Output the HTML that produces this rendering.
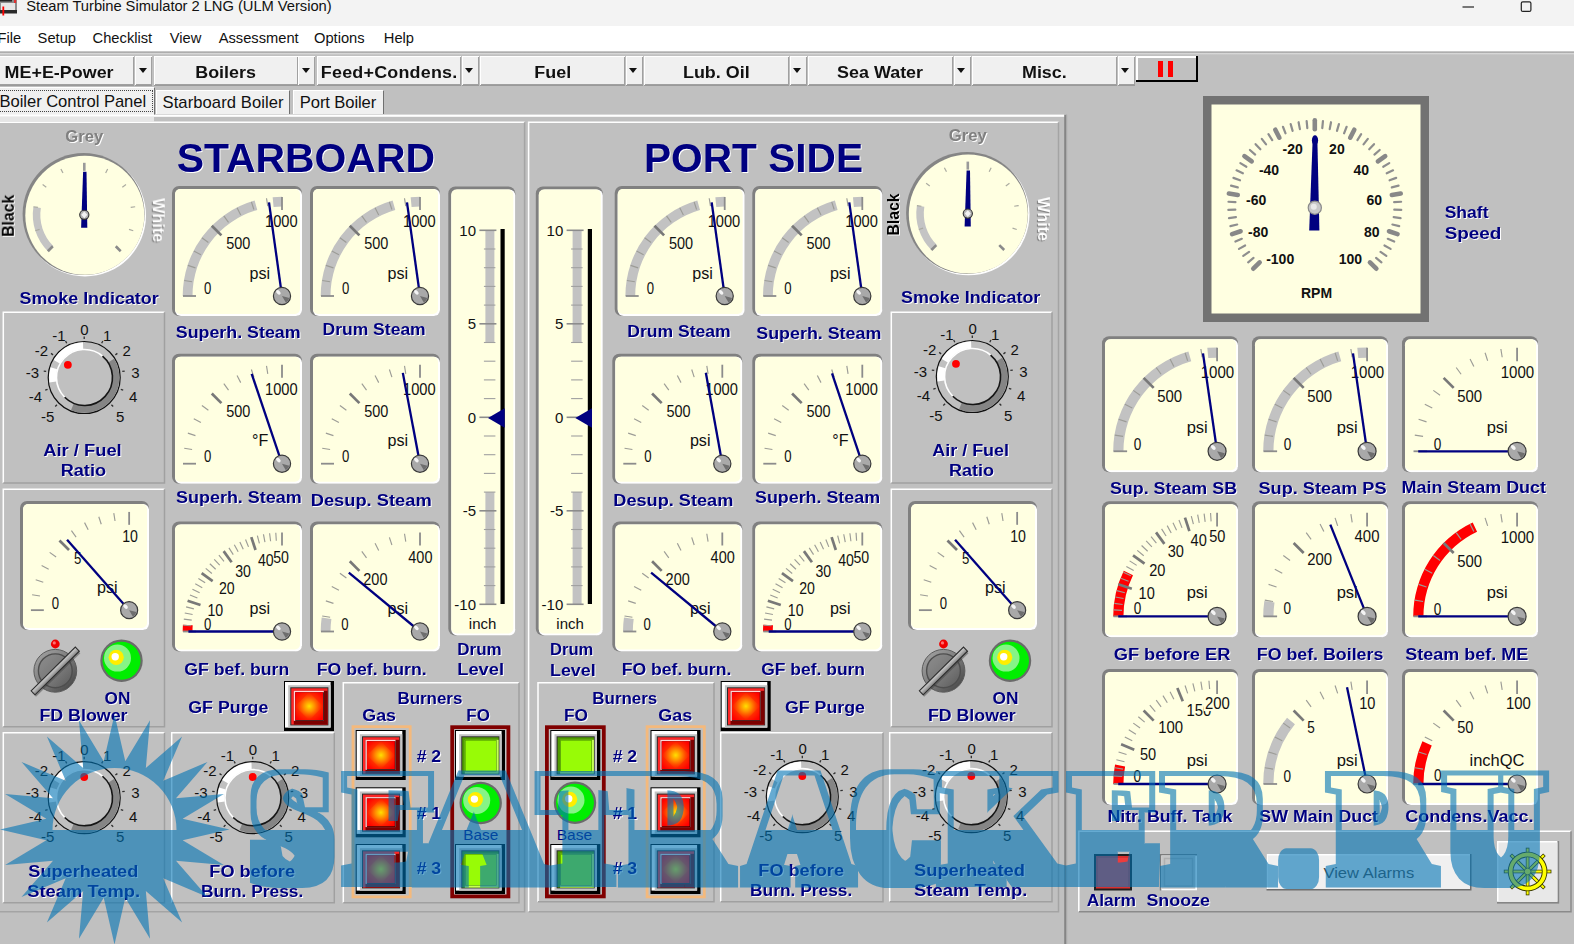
<!DOCTYPE html>
<html lang="en"><head><meta charset="utf-8">
<title>Steam Turbine Simulator 2 LNG (ULM Version)</title>
<style>
html,body{margin:0;padding:0;background:#c0c0c0;}
body{width:1574px;height:944px;overflow:hidden;position:relative;font-family:'Liberation Sans',sans-serif;}
#titlebar{position:absolute;left:0;top:0;width:1574px;height:26px;background:#f3f3f3;}
#titlebar .t{position:absolute;left:26.3px;top:-2.6px;font-size:14.75px;line-height:18px;color:#111;white-space:nowrap;letter-spacing:-.05px}
#menubar{position:absolute;left:0;top:26px;width:1574px;height:25px;background:#ffffff;}
#menubar span{position:absolute;top:3px;font-size:14.7px;line-height:18px;color:#111;white-space:nowrap}
#sep{position:absolute;left:0;top:50.6px;width:1574px;height:4.6px;background:linear-gradient(#e8e8e8 0,#9c9c9c 28%,#d8d8d8 60%,#c0c0c0 100%);}
.tb{position:absolute;top:56px;height:28.5px;background:#f0f0f0;box-shadow:inset 1px 1px 0 #fff,inset -1px -1px 0 #a0a0a0,0 1px 0 #9a9a9a;text-align:center;font-weight:bold;font-size:16.3px;line-height:33.5px;color:#111;white-space:nowrap;box-sizing:border-box;overflow:hidden}
.tb span{display:inline-block;transform:scaleX(1.1);transform-origin:center}
.ta{position:absolute;top:56px;width:17px;height:28.5px;background:#f0f0f0;box-shadow:inset 1px 1px 0 #fff,inset -1px -1px 0 #a0a0a0,0 1px 0 #9a9a9a;}
.ta i{position:absolute;left:3.8px;top:12.2px;width:0;height:0;border-left:4.9px solid transparent;border-right:4.9px solid transparent;border-top:5.4px solid #111}
#pause{position:absolute;left:1135.5px;top:56px;width:62px;height:26px;background:#000}
#pause b{position:absolute;left:0;top:0;width:60px;height:24px;background:#fff}
#pause em{position:absolute;left:2px;top:2px;width:58px;height:22px;background:#c0c0c0}
#pause s{position:absolute;top:5px;width:5px;height:16px;background:#ff0000}
.tab{position:absolute;background:#f0f0f0;box-sizing:border-box;font-size:16px;color:#111;white-space:nowrap;border-top:1px solid #fff;border-left:1px solid #fff;border-right:1.5px solid #707070}
#main text{font-family:'Liberation Sans',sans-serif}
#wm text{font-family:'Liberation Serif',serif;font-weight:bold}
#main{position:absolute;left:0;top:0}
#wm{position:absolute;left:0;top:0;pointer-events:none}
</style></head>
<body>
<div id="titlebar">
 <svg width="20" height="18" style="position:absolute;left:0;top:0"><rect x="-2" y="0" width="19" height="13" fill="#8c8c8c"/><rect x="1" y="3" width="14" height="7" fill="#e6e6e6"/><rect x="-2" y="10" width="19" height="3.5" fill="#2a2a2a"/><rect x="-2" y="-1" width="14" height="2.5" fill="#222"/><rect x="2.4" y="6.5" width="1.8" height="9" fill="#ff0000"/><rect x="14" y="0" width="2.2" height="3" fill="#e03030"/></svg>
 <div class="t">Steam Turbine Simulator 2 LNG (ULM Version)</div>
 <svg width="120" height="26" style="position:absolute;left:1454px;top:0"><line x1="8.5" y1="7" x2="20" y2="7" stroke="#222" stroke-width="1.2"/><rect x="67.3" y="1.8" width="9.6" height="9.6" rx="1.5" fill="none" stroke="#222" stroke-width="1.2"/></svg>
</div>
<div id="menubar">
 <span style="left:-2.5px">File</span><span style="left:37.6px">Setup</span><span style="left:92.6px">Checklist</span><span style="left:169.8px">View</span><span style="left:218.7px">Assessment</span><span style="left:314px">Options</span><span style="left:383.8px">Help</span>
</div>
<div id="sep"></div>
<div id="toolbar"><div class="tb" style="left:-2px;width:136px;text-align:left"><span style="padding-left:11px">ME+E-Power</span></div><div class="ta" style="left:135px"><i></i></div><div class="tb" style="left:153.5px;width:144.3px"><span>Boilers</span></div><div class="ta" style="left:298.3px"><i></i></div><div class="tb" style="left:316.5px;width:144.5px"><span style="letter-spacing:.2px">Feed+Condens.</span></div><div class="ta" style="left:461.5px"><i></i></div><div class="tb" style="left:480px;width:145px"><span>Fuel</span></div><div class="ta" style="left:625.5px"><i></i></div><div class="tb" style="left:644px;width:145px"><span>Lub. Oil</span></div><div class="ta" style="left:789.5px"><i></i></div><div class="tb" style="left:808px;width:145px"><span>Sea Water</span></div><div class="ta" style="left:953.5px"><i></i></div><div class="tb" style="left:971.5px;width:145.6px"><span>Misc.</span></div><div class="ta" style="left:1117.6px"><i></i></div>
 <div id="pause"><b></b><em></em><s style="left:22.7px"></s><s style="left:32.4px"></s></div>
</div>
<div class="tab" style="left:-2px;top:86.5px;width:157.3px;height:28.5px;line-height:27px;padding-left:.5px;font-size:16.6px;letter-spacing:-.05px"><span style="position:absolute;left:-1px;top:2.5px;right:1.6px;bottom:3px;border:1px dotted #444"></span>Boiler Control Panel</div>
<div class="tab" style="left:156px;top:89.5px;width:134px;height:24.5px;line-height:23.5px;padding-left:5.5px;font-size:16.6px;letter-spacing:.08px">Starboard Boiler</div>
<div class="tab" style="left:292.8px;top:89.5px;width:91.6px;height:24.5px;line-height:23.5px;padding-left:6px;font-size:16.6px;letter-spacing:-.1px">Port Boiler</div>
<svg id="main" width="1574" height="944" viewBox="0 0 1574 944">
<defs>
 <radialGradient id="rg" cx="50%" cy="50%" r="50%"><stop offset="0" stop-color="#ffe000"/><stop offset=".4" stop-color="#ff8c00"/><stop offset="1" stop-color="#ff3000" stop-opacity="0"/></radialGradient>
 <radialGradient id="rb" cx="50%" cy="50%" r="62%"><stop offset="0" stop-color="#ff9000"/><stop offset=".55" stop-color="#ff3400"/><stop offset="1" stop-color="#ff0000"/></radialGradient>
 <linearGradient id="tgL" x1="0.42" y1="0.42" x2="0.58" y2="0.58"><stop offset="0" stop-color="#e4e4e4"/><stop offset=".45" stop-color="#b4b4b4"/><stop offset="1" stop-color="#565656"/></linearGradient>
 <linearGradient id="tgO" x1="0" y1="0" x2="1" y2="1"><stop offset="0" stop-color="#a8a8a8"/><stop offset=".5" stop-color="#7c7c7c"/><stop offset="1" stop-color="#3c3c3c"/></linearGradient>
 <linearGradient id="tgI" x1="0" y1="0" x2="1" y2="1"><stop offset="0" stop-color="#8e8e8e"/><stop offset=".6" stop-color="#767676"/><stop offset="1" stop-color="#5a5a5a"/></linearGradient>
</defs>
<rect x="0" y="114.6" width="1066" height="2.2" fill="#ffffff"/>
<rect x="0" y="116.8" width="154" height="4.6" fill="#e6e6e6"/>
<rect x="1064.2" y="114.6" width="2" height="840" fill="#858585"/>
<rect x="1066.2" y="114.6" width="1" height="840" fill="#a8a8a8"/>
<path d="M-2 911.7V122.3H524.6" fill="none" stroke="#ffffff" stroke-width="1.5"/>
<path d="M-2 911.7H524.6V122.3" fill="none" stroke="#a4a4a4" stroke-width="1.5"/>
<path d="M528.6 911.7V122.3H1058.5" fill="none" stroke="#ffffff" stroke-width="1.5"/>
<path d="M528.6 911.7H1058.5V122.3" fill="none" stroke="#a4a4a4" stroke-width="1.5"/>
<path d="M3.3 483V312.3H164.5" fill="none" stroke="#ffffff" stroke-width="1.5"/>
<path d="M3.3 483H164.5V312.3" fill="none" stroke="#a0a0a0" stroke-width="1.5"/>
<path d="M3.3 726.7V489.3H164.5" fill="none" stroke="#ffffff" stroke-width="1.5"/>
<path d="M3.3 726.7H164.5V489.3" fill="none" stroke="#a0a0a0" stroke-width="1.5"/>
<path d="M3.3 902.7V732.7H164.5" fill="none" stroke="#ffffff" stroke-width="1.5"/>
<path d="M3.3 902.7H164.5V732.7" fill="none" stroke="#a0a0a0" stroke-width="1.5"/>
<path d="M171.7 902.7V732.7H334.3" fill="none" stroke="#ffffff" stroke-width="1.5"/>
<path d="M171.7 902.7H334.3V732.7" fill="none" stroke="#a0a0a0" stroke-width="1.5"/>
<path d="M343.3 902.7V682.7H519" fill="none" stroke="#ffffff" stroke-width="1.5"/>
<path d="M343.3 902.7H519V682.7" fill="none" stroke="#a0a0a0" stroke-width="1.5"/>
<path d="M538 901.7V682.7H714" fill="none" stroke="#ffffff" stroke-width="1.5"/>
<path d="M538 901.7H714V682.7" fill="none" stroke="#a0a0a0" stroke-width="1.5"/>
<path d="M720.7 901.7V732.7H883" fill="none" stroke="#ffffff" stroke-width="1.5"/>
<path d="M720.7 901.7H883V732.7" fill="none" stroke="#a0a0a0" stroke-width="1.5"/>
<path d="M889.7 901.7V732.7H1052" fill="none" stroke="#ffffff" stroke-width="1.5"/>
<path d="M889.7 901.7H1052V732.7" fill="none" stroke="#a0a0a0" stroke-width="1.5"/>
<path d="M891.3 483V312.3H1052" fill="none" stroke="#ffffff" stroke-width="1.5"/>
<path d="M891.3 483H1052V312.3" fill="none" stroke="#a0a0a0" stroke-width="1.5"/>
<path d="M891.3 726.7V489.3H1052" fill="none" stroke="#ffffff" stroke-width="1.5"/>
<path d="M891.3 726.7H1052V489.3" fill="none" stroke="#a0a0a0" stroke-width="1.5"/>
<circle cx="85" cy="215.5" r="61" fill="#ffffff"/>
<circle cx="83.6" cy="214.1" r="61" fill="#858585"/>
<circle cx="84.8" cy="215.3" r="59.5" fill="#ffffe1"/>
<path d="M47.88 251.22A51.5 51.5 0 0 1 33.43 206.74L40.84 207.92A44 44 0 0 0 53.19 245.91Z" fill="#c4c4c4"/>
<line x1="47.88" y1="251.22" x2="52.83" y2="246.27" stroke="#8a8a8a" stroke-width="2.6" stroke-linecap="butt"/>
<line x1="35.32" y1="230.71" x2="39.6" y2="229.32" stroke="#aaaaa0" stroke-width="1.2" stroke-linecap="butt"/>
<line x1="33.43" y1="206.74" x2="37.88" y2="207.45" stroke="#aaaaa0" stroke-width="1.2" stroke-linecap="butt"/>
<line x1="42.64" y1="184.53" x2="46.28" y2="187.17" stroke="#aaaaa0" stroke-width="1.2" stroke-linecap="butt"/>
<line x1="60.92" y1="168.91" x2="62.96" y2="172.92" stroke="#aaaaa0" stroke-width="1.2" stroke-linecap="butt"/>
<line x1="84.3" y1="162.8" x2="84.3" y2="170.8" stroke="#9a9a9a" stroke-width="2.6" stroke-linecap="butt"/>
<line x1="107.68" y1="168.91" x2="105.64" y2="172.92" stroke="#aaaaa0" stroke-width="1.2" stroke-linecap="butt"/>
<line x1="125.96" y1="184.53" x2="122.32" y2="187.17" stroke="#aaaaa0" stroke-width="1.2" stroke-linecap="butt"/>
<line x1="135.17" y1="206.74" x2="130.72" y2="207.45" stroke="#aaaaa0" stroke-width="1.2" stroke-linecap="butt"/>
<line x1="133.28" y1="230.71" x2="129" y2="229.32" stroke="#aaaaa0" stroke-width="1.2" stroke-linecap="butt"/>
<line x1="120.72" y1="251.22" x2="115.77" y2="246.27" stroke="#8a8a8a" stroke-width="2.6" stroke-linecap="butt"/>
<path d="M81.1 227.8L83.1 171.8L86.5 171.8L87.3 227.8Z" fill="#000080"/>
<circle cx="84.3" cy="214.8" r="4.6" fill="#b4b4b4" stroke="#303030" stroke-width="1.1"/>
<path d="M81.3 214.8l3 -3.4l3 3.4l-3 3.4z" fill="#f2f2f2"/>
<text transform="translate(152.8 198.3) rotate(90)" font-size="16" font-weight="bold" fill="#ffffff" textLength="44" lengthAdjust="spacingAndGlyphs" style="filter:drop-shadow(1px 1px 0 #7c7c7c)">White</text>
<circle cx="968.5" cy="214.3" r="61" fill="#ffffff"/>
<circle cx="967.1" cy="212.9" r="61" fill="#858585"/>
<circle cx="968.3" cy="214.1" r="59.5" fill="#ffffe1"/>
<path d="M931.38 250.02A51.5 51.5 0 0 1 916.93 205.54L924.34 206.72A44 44 0 0 0 936.69 244.71Z" fill="#c4c4c4"/>
<line x1="931.38" y1="250.02" x2="936.33" y2="245.07" stroke="#8a8a8a" stroke-width="2.6" stroke-linecap="butt"/>
<line x1="918.82" y1="229.51" x2="923.1" y2="228.12" stroke="#aaaaa0" stroke-width="1.2" stroke-linecap="butt"/>
<line x1="916.93" y1="205.54" x2="921.38" y2="206.25" stroke="#aaaaa0" stroke-width="1.2" stroke-linecap="butt"/>
<line x1="926.14" y1="183.33" x2="929.78" y2="185.97" stroke="#aaaaa0" stroke-width="1.2" stroke-linecap="butt"/>
<line x1="944.42" y1="167.71" x2="946.46" y2="171.72" stroke="#aaaaa0" stroke-width="1.2" stroke-linecap="butt"/>
<line x1="967.8" y1="161.6" x2="967.8" y2="169.6" stroke="#9a9a9a" stroke-width="2.6" stroke-linecap="butt"/>
<line x1="991.18" y1="167.71" x2="989.14" y2="171.72" stroke="#aaaaa0" stroke-width="1.2" stroke-linecap="butt"/>
<line x1="1009.46" y1="183.33" x2="1005.82" y2="185.97" stroke="#aaaaa0" stroke-width="1.2" stroke-linecap="butt"/>
<line x1="1018.67" y1="205.54" x2="1014.22" y2="206.25" stroke="#aaaaa0" stroke-width="1.2" stroke-linecap="butt"/>
<line x1="1016.78" y1="229.51" x2="1012.5" y2="228.12" stroke="#aaaaa0" stroke-width="1.2" stroke-linecap="butt"/>
<line x1="1004.22" y1="250.02" x2="999.27" y2="245.07" stroke="#8a8a8a" stroke-width="2.6" stroke-linecap="butt"/>
<path d="M964.6 226.6L966.6 170.6L970 170.6L970.8 226.6Z" fill="#000080"/>
<circle cx="967.8" cy="213.6" r="4.6" fill="#b4b4b4" stroke="#303030" stroke-width="1.1"/>
<path d="M964.8 213.6l3 -3.4l3 3.4l-3 3.4z" fill="#f2f2f2"/>
<text transform="translate(1037.9 197.1) rotate(90)" font-size="16" font-weight="bold" fill="#ffffff" textLength="44" lengthAdjust="spacingAndGlyphs" style="filter:drop-shadow(1px 1px 0 #7c7c7c)">White</text>
<circle cx="84.2" cy="377.5" r="36" fill="#c0c0c0" stroke="#101010" stroke-width="1.2"/>
<path d="M56.75 361.65A31.7 31.7 0 0 1 83.09 345.82" fill="none" stroke="#ffffff" stroke-width="7"/>
<path d="M52.81 381.91A31.7 31.7 0 0 1 53.89 368.23" fill="none" stroke="#ffffff" stroke-width="7"/>
<path d="M111.08 360.7A31.7 31.7 0 0 1 72.32 406.89" fill="none" stroke="#858585" stroke-width="7"/>
<circle cx="84.5" cy="377.5" r="28" fill="#c0c0c0"/>
<path d="M64.7 397.3A28 28 0 0 1 102.5 356.05" fill="none" stroke="#ffffff" stroke-width="1.6"/>
<path d="M102.5 356.05A28 28 0 1 1 64.7 397.3" fill="none" stroke="#151515" stroke-width="1.6"/>
<line x1="56.98" y1="404.72" x2="55.21" y2="406.49" stroke="#303030" stroke-width="1.3" stroke-linecap="butt"/>
<line x1="47.58" y1="389.4" x2="45.21" y2="390.17" stroke="#303030" stroke-width="1.3" stroke-linecap="butt"/>
<line x1="46.17" y1="371.48" x2="43.7" y2="371.09" stroke="#303030" stroke-width="1.3" stroke-linecap="butt"/>
<line x1="53.05" y1="354.87" x2="51.03" y2="353.4" stroke="#303030" stroke-width="1.3" stroke-linecap="butt"/>
<line x1="66.72" y1="343.2" x2="65.59" y2="340.97" stroke="#303030" stroke-width="1.3" stroke-linecap="butt"/>
<line x1="84.2" y1="339" x2="84.2" y2="336.5" stroke="#303030" stroke-width="1.3" stroke-linecap="butt"/>
<line x1="101.68" y1="343.2" x2="102.81" y2="340.97" stroke="#303030" stroke-width="1.3" stroke-linecap="butt"/>
<line x1="115.35" y1="354.87" x2="117.37" y2="353.4" stroke="#303030" stroke-width="1.3" stroke-linecap="butt"/>
<line x1="122.23" y1="371.48" x2="124.7" y2="371.09" stroke="#303030" stroke-width="1.3" stroke-linecap="butt"/>
<line x1="120.82" y1="389.4" x2="123.19" y2="390.17" stroke="#303030" stroke-width="1.3" stroke-linecap="butt"/>
<line x1="111.42" y1="404.72" x2="113.19" y2="406.49" stroke="#303030" stroke-width="1.3" stroke-linecap="butt"/>
<text x="84.5" y="334.5" font-size="15" fill="#111" font-weight="normal" text-anchor="middle">0</text>
<text x="65.5" y="340.5" font-size="15" fill="#111" font-weight="normal" text-anchor="end">-1</text>
<text x="103" y="340.5" font-size="15" fill="#111" font-weight="normal" text-anchor="start">1</text>
<text x="48.2" y="355.5" font-size="15" fill="#111" font-weight="normal" text-anchor="end">-2</text>
<text x="122.4" y="355.5" font-size="15" fill="#111" font-weight="normal" text-anchor="start">2</text>
<text x="39" y="378.1" font-size="15" fill="#111" font-weight="normal" text-anchor="end">-3</text>
<text x="131.2" y="378.1" font-size="15" fill="#111" font-weight="normal" text-anchor="start">3</text>
<text x="42" y="401.5" font-size="15" fill="#111" font-weight="normal" text-anchor="end">-4</text>
<text x="129" y="401.5" font-size="15" fill="#111" font-weight="normal" text-anchor="start">4</text>
<text x="54.4" y="421.5" font-size="15" fill="#111" font-weight="normal" text-anchor="end">-5</text>
<text x="116" y="421.5" font-size="15" fill="#111" font-weight="normal" text-anchor="start">5</text>
<circle cx="67.86" cy="364.79" r="3.9" fill="#ff0000"/>
<circle cx="972.3" cy="376.5" r="36" fill="#c0c0c0" stroke="#101010" stroke-width="1.2"/>
<path d="M944.85 360.65A31.7 31.7 0 0 1 971.19 344.82" fill="none" stroke="#ffffff" stroke-width="7"/>
<path d="M940.91 380.91A31.7 31.7 0 0 1 941.99 367.23" fill="none" stroke="#ffffff" stroke-width="7"/>
<path d="M999.18 359.7A31.7 31.7 0 0 1 960.42 405.89" fill="none" stroke="#858585" stroke-width="7"/>
<circle cx="972.6" cy="376.5" r="28" fill="#c0c0c0"/>
<path d="M952.8 396.3A28 28 0 0 1 990.6 355.05" fill="none" stroke="#ffffff" stroke-width="1.6"/>
<path d="M990.6 355.05A28 28 0 1 1 952.8 396.3" fill="none" stroke="#151515" stroke-width="1.6"/>
<line x1="945.08" y1="403.72" x2="943.31" y2="405.49" stroke="#303030" stroke-width="1.3" stroke-linecap="butt"/>
<line x1="935.68" y1="388.4" x2="933.31" y2="389.17" stroke="#303030" stroke-width="1.3" stroke-linecap="butt"/>
<line x1="934.27" y1="370.48" x2="931.8" y2="370.09" stroke="#303030" stroke-width="1.3" stroke-linecap="butt"/>
<line x1="941.15" y1="353.87" x2="939.13" y2="352.4" stroke="#303030" stroke-width="1.3" stroke-linecap="butt"/>
<line x1="954.82" y1="342.2" x2="953.69" y2="339.97" stroke="#303030" stroke-width="1.3" stroke-linecap="butt"/>
<line x1="972.3" y1="338" x2="972.3" y2="335.5" stroke="#303030" stroke-width="1.3" stroke-linecap="butt"/>
<line x1="989.78" y1="342.2" x2="990.91" y2="339.97" stroke="#303030" stroke-width="1.3" stroke-linecap="butt"/>
<line x1="1003.45" y1="353.87" x2="1005.47" y2="352.4" stroke="#303030" stroke-width="1.3" stroke-linecap="butt"/>
<line x1="1010.33" y1="370.48" x2="1012.8" y2="370.09" stroke="#303030" stroke-width="1.3" stroke-linecap="butt"/>
<line x1="1008.92" y1="388.4" x2="1011.29" y2="389.17" stroke="#303030" stroke-width="1.3" stroke-linecap="butt"/>
<line x1="999.52" y1="403.72" x2="1001.29" y2="405.49" stroke="#303030" stroke-width="1.3" stroke-linecap="butt"/>
<text x="972.6" y="333.5" font-size="15" fill="#111" font-weight="normal" text-anchor="middle">0</text>
<text x="953.6" y="339.5" font-size="15" fill="#111" font-weight="normal" text-anchor="end">-1</text>
<text x="991.1" y="339.5" font-size="15" fill="#111" font-weight="normal" text-anchor="start">1</text>
<text x="936.3" y="354.5" font-size="15" fill="#111" font-weight="normal" text-anchor="end">-2</text>
<text x="1010.5" y="354.5" font-size="15" fill="#111" font-weight="normal" text-anchor="start">2</text>
<text x="927.1" y="377.1" font-size="15" fill="#111" font-weight="normal" text-anchor="end">-3</text>
<text x="1019.3" y="377.1" font-size="15" fill="#111" font-weight="normal" text-anchor="start">3</text>
<text x="930.1" y="400.5" font-size="15" fill="#111" font-weight="normal" text-anchor="end">-4</text>
<text x="1017.1" y="400.5" font-size="15" fill="#111" font-weight="normal" text-anchor="start">4</text>
<text x="942.5" y="420.5" font-size="15" fill="#111" font-weight="normal" text-anchor="end">-5</text>
<text x="1004.1" y="420.5" font-size="15" fill="#111" font-weight="normal" text-anchor="start">5</text>
<circle cx="955.96" cy="363.79" r="3.9" fill="#ff0000"/>
<rect x="172" y="186" width="130" height="130" rx="7" fill="#808080"/>
<rect x="175" y="189" width="127" height="127" rx="6" fill="#ffffff"/>
<rect x="175" y="189" width="125" height="125" rx="5" fill="#ffffe1"/>
<path d="M182.7 296A99.3 99.3 0 0 1 254.6 200.56L257.3 209.98A89.5 89.5 0 0 0 192.5 296Z" fill="#c2c2c2"/>
<path d="M272.66 197.14A99.3 99.3 0 0 1 282 196.7L282 206.5A89.5 89.5 0 0 0 273.58 206.9Z" fill="#c2c2c2"/>
<line x1="183" y1="296" x2="196" y2="296" stroke="#8c8c8c" stroke-width="1.8" stroke-linecap="butt"/>
<line x1="184.22" y1="280.51" x2="192.12" y2="281.76" stroke="#9c9c96" stroke-width="1.15" stroke-linecap="butt"/>
<line x1="187.85" y1="265.41" x2="195.45" y2="267.88" stroke="#9c9c96" stroke-width="1.15" stroke-linecap="butt"/>
<line x1="193.79" y1="251.05" x2="200.92" y2="254.69" stroke="#9c9c96" stroke-width="1.15" stroke-linecap="butt"/>
<line x1="201.91" y1="237.81" x2="208.38" y2="242.51" stroke="#9c9c96" stroke-width="1.15" stroke-linecap="butt"/>
<line x1="211.78" y1="225.78" x2="221.4" y2="235.4" stroke="#787878" stroke-width="2.7" stroke-linecap="butt"/>
<line x1="223.81" y1="215.91" x2="228.51" y2="222.38" stroke="#9c9c96" stroke-width="1.15" stroke-linecap="butt"/>
<line x1="237.05" y1="207.79" x2="240.69" y2="214.92" stroke="#9c9c96" stroke-width="1.15" stroke-linecap="butt"/>
<line x1="251.41" y1="201.85" x2="253.88" y2="209.45" stroke="#9c9c96" stroke-width="1.15" stroke-linecap="butt"/>
<line x1="266.51" y1="198.22" x2="267.76" y2="206.12" stroke="#9c9c96" stroke-width="1.15" stroke-linecap="butt"/>
<line x1="282" y1="197" x2="282" y2="210" stroke="#8c8c8c" stroke-width="1.8" stroke-linecap="butt"/>
<text x="204" y="294.3" font-size="15.7" fill="#111" font-weight="normal" text-anchor="start" textLength="7.32" lengthAdjust="spacingAndGlyphs">0</text>
<text x="226.2" y="249.3" font-size="15.7" fill="#111" font-weight="normal" text-anchor="start" textLength="24.16" lengthAdjust="spacingAndGlyphs">500</text>
<text x="265" y="227.3" font-size="15.7" fill="#111" font-weight="normal" text-anchor="start" textLength="32.58" lengthAdjust="spacingAndGlyphs">1000</text>
<text x="249.6" y="278.5" font-size="16.1" fill="#111" font-weight="normal" text-anchor="start">psi</text>
<line x1="282" y1="296" x2="268.98" y2="202.4" stroke="#000080" stroke-width="2.3" stroke-linecap="butt"/>
<circle cx="282" cy="296" r="8.6" fill="#a9a9a9" stroke="#3a3a3a" stroke-width="1.2"/>
<path d="M282 296L289.34 297.97A7.6 7.6 0 0 1 285.8 302.58Z" fill="#6e6e6e"/>
<ellipse cx="278.39" cy="292.39" rx="2.75" ry="1.72" fill="#f4f4f4" transform="rotate(45 278.39 292.39)"/>
<rect x="310" y="186" width="130" height="130" rx="7" fill="#808080"/>
<rect x="313" y="189" width="127" height="127" rx="6" fill="#ffffff"/>
<rect x="313" y="189" width="125" height="125" rx="5" fill="#ffffe1"/>
<path d="M320.7 296A99.3 99.3 0 0 1 392.6 200.56L395.3 209.98A89.5 89.5 0 0 0 330.5 296Z" fill="#c2c2c2"/>
<path d="M410.66 197.14A99.3 99.3 0 0 1 420 196.7L420 206.5A89.5 89.5 0 0 0 411.58 206.9Z" fill="#c2c2c2"/>
<line x1="321" y1="296" x2="334" y2="296" stroke="#8c8c8c" stroke-width="1.8" stroke-linecap="butt"/>
<line x1="322.22" y1="280.51" x2="330.12" y2="281.76" stroke="#9c9c96" stroke-width="1.15" stroke-linecap="butt"/>
<line x1="325.85" y1="265.41" x2="333.45" y2="267.88" stroke="#9c9c96" stroke-width="1.15" stroke-linecap="butt"/>
<line x1="331.79" y1="251.05" x2="338.92" y2="254.69" stroke="#9c9c96" stroke-width="1.15" stroke-linecap="butt"/>
<line x1="339.91" y1="237.81" x2="346.38" y2="242.51" stroke="#9c9c96" stroke-width="1.15" stroke-linecap="butt"/>
<line x1="349.78" y1="225.78" x2="359.4" y2="235.4" stroke="#787878" stroke-width="2.7" stroke-linecap="butt"/>
<line x1="361.81" y1="215.91" x2="366.51" y2="222.38" stroke="#9c9c96" stroke-width="1.15" stroke-linecap="butt"/>
<line x1="375.05" y1="207.79" x2="378.69" y2="214.92" stroke="#9c9c96" stroke-width="1.15" stroke-linecap="butt"/>
<line x1="389.41" y1="201.85" x2="391.88" y2="209.45" stroke="#9c9c96" stroke-width="1.15" stroke-linecap="butt"/>
<line x1="404.51" y1="198.22" x2="405.76" y2="206.12" stroke="#9c9c96" stroke-width="1.15" stroke-linecap="butt"/>
<line x1="420" y1="197" x2="420" y2="210" stroke="#8c8c8c" stroke-width="1.8" stroke-linecap="butt"/>
<text x="342" y="294.3" font-size="15.7" fill="#111" font-weight="normal" text-anchor="start" textLength="7.32" lengthAdjust="spacingAndGlyphs">0</text>
<text x="364.2" y="249.3" font-size="15.7" fill="#111" font-weight="normal" text-anchor="start" textLength="24.16" lengthAdjust="spacingAndGlyphs">500</text>
<text x="403" y="227.3" font-size="15.7" fill="#111" font-weight="normal" text-anchor="start" textLength="32.58" lengthAdjust="spacingAndGlyphs">1000</text>
<text x="387.6" y="278.5" font-size="16.1" fill="#111" font-weight="normal" text-anchor="start">psi</text>
<line x1="420" y1="296" x2="406.98" y2="202.4" stroke="#000080" stroke-width="2.3" stroke-linecap="butt"/>
<circle cx="420" cy="296" r="8.6" fill="#a9a9a9" stroke="#3a3a3a" stroke-width="1.2"/>
<path d="M420 296L427.34 297.97A7.6 7.6 0 0 1 423.8 302.58Z" fill="#6e6e6e"/>
<ellipse cx="416.39" cy="292.39" rx="2.75" ry="1.72" fill="#f4f4f4" transform="rotate(45 416.39 292.39)"/>
<rect x="172" y="353.7" width="130" height="130" rx="7" fill="#808080"/>
<rect x="175" y="356.7" width="127" height="127" rx="6" fill="#ffffff"/>
<rect x="175" y="356.7" width="125" height="125" rx="5" fill="#ffffe1"/>
<line x1="183" y1="463.7" x2="196" y2="463.7" stroke="#8c8c8c" stroke-width="1.8" stroke-linecap="butt"/>
<line x1="184.22" y1="448.21" x2="192.12" y2="449.46" stroke="#9c9c96" stroke-width="1.15" stroke-linecap="butt"/>
<line x1="187.85" y1="433.11" x2="195.45" y2="435.58" stroke="#9c9c96" stroke-width="1.15" stroke-linecap="butt"/>
<line x1="193.79" y1="418.75" x2="200.92" y2="422.39" stroke="#9c9c96" stroke-width="1.15" stroke-linecap="butt"/>
<line x1="201.91" y1="405.51" x2="208.38" y2="410.21" stroke="#9c9c96" stroke-width="1.15" stroke-linecap="butt"/>
<line x1="211.78" y1="393.48" x2="221.4" y2="403.1" stroke="#787878" stroke-width="2.7" stroke-linecap="butt"/>
<line x1="223.81" y1="383.61" x2="228.51" y2="390.08" stroke="#9c9c96" stroke-width="1.15" stroke-linecap="butt"/>
<line x1="237.05" y1="375.49" x2="240.69" y2="382.62" stroke="#9c9c96" stroke-width="1.15" stroke-linecap="butt"/>
<line x1="251.41" y1="369.55" x2="253.88" y2="377.15" stroke="#9c9c96" stroke-width="1.15" stroke-linecap="butt"/>
<line x1="266.51" y1="365.92" x2="267.76" y2="373.82" stroke="#9c9c96" stroke-width="1.15" stroke-linecap="butt"/>
<line x1="282" y1="364.7" x2="282" y2="377.7" stroke="#8c8c8c" stroke-width="1.8" stroke-linecap="butt"/>
<text x="204" y="462" font-size="15.7" fill="#111" font-weight="normal" text-anchor="start" textLength="7.32" lengthAdjust="spacingAndGlyphs">0</text>
<text x="226.2" y="417" font-size="15.7" fill="#111" font-weight="normal" text-anchor="start" textLength="24.16" lengthAdjust="spacingAndGlyphs">500</text>
<text x="265" y="395" font-size="15.7" fill="#111" font-weight="normal" text-anchor="start" textLength="32.58" lengthAdjust="spacingAndGlyphs">1000</text>
<text x="252" y="446.2" font-size="16.1" fill="#111" font-weight="normal" text-anchor="start">°F</text>
<line x1="282" y1="463.7" x2="251.68" y2="373.77" stroke="#000080" stroke-width="2.3" stroke-linecap="butt"/>
<circle cx="282" cy="463.7" r="8.6" fill="#a9a9a9" stroke="#3a3a3a" stroke-width="1.2"/>
<path d="M282 463.7L289.34 465.67A7.6 7.6 0 0 1 285.8 470.28Z" fill="#6e6e6e"/>
<ellipse cx="278.39" cy="460.09" rx="2.75" ry="1.72" fill="#f4f4f4" transform="rotate(45 278.39 460.09)"/>
<rect x="310" y="353.7" width="130" height="130" rx="7" fill="#808080"/>
<rect x="313" y="356.7" width="127" height="127" rx="6" fill="#ffffff"/>
<rect x="313" y="356.7" width="125" height="125" rx="5" fill="#ffffe1"/>
<line x1="321" y1="463.7" x2="334" y2="463.7" stroke="#8c8c8c" stroke-width="1.8" stroke-linecap="butt"/>
<line x1="322.22" y1="448.21" x2="330.12" y2="449.46" stroke="#9c9c96" stroke-width="1.15" stroke-linecap="butt"/>
<line x1="325.85" y1="433.11" x2="333.45" y2="435.58" stroke="#9c9c96" stroke-width="1.15" stroke-linecap="butt"/>
<line x1="331.79" y1="418.75" x2="338.92" y2="422.39" stroke="#9c9c96" stroke-width="1.15" stroke-linecap="butt"/>
<line x1="339.91" y1="405.51" x2="346.38" y2="410.21" stroke="#9c9c96" stroke-width="1.15" stroke-linecap="butt"/>
<line x1="349.78" y1="393.48" x2="359.4" y2="403.1" stroke="#787878" stroke-width="2.7" stroke-linecap="butt"/>
<line x1="361.81" y1="383.61" x2="366.51" y2="390.08" stroke="#9c9c96" stroke-width="1.15" stroke-linecap="butt"/>
<line x1="375.05" y1="375.49" x2="378.69" y2="382.62" stroke="#9c9c96" stroke-width="1.15" stroke-linecap="butt"/>
<line x1="389.41" y1="369.55" x2="391.88" y2="377.15" stroke="#9c9c96" stroke-width="1.15" stroke-linecap="butt"/>
<line x1="404.51" y1="365.92" x2="405.76" y2="373.82" stroke="#9c9c96" stroke-width="1.15" stroke-linecap="butt"/>
<line x1="420" y1="364.7" x2="420" y2="377.7" stroke="#8c8c8c" stroke-width="1.8" stroke-linecap="butt"/>
<text x="342" y="462" font-size="15.7" fill="#111" font-weight="normal" text-anchor="start" textLength="7.32" lengthAdjust="spacingAndGlyphs">0</text>
<text x="364.2" y="417" font-size="15.7" fill="#111" font-weight="normal" text-anchor="start" textLength="24.16" lengthAdjust="spacingAndGlyphs">500</text>
<text x="403" y="395" font-size="15.7" fill="#111" font-weight="normal" text-anchor="start" textLength="32.58" lengthAdjust="spacingAndGlyphs">1000</text>
<text x="387.6" y="446.2" font-size="16.1" fill="#111" font-weight="normal" text-anchor="start">psi</text>
<line x1="420" y1="463.7" x2="402.83" y2="372.91" stroke="#000080" stroke-width="2.3" stroke-linecap="butt"/>
<circle cx="420" cy="463.7" r="8.6" fill="#a9a9a9" stroke="#3a3a3a" stroke-width="1.2"/>
<path d="M420 463.7L427.34 465.67A7.6 7.6 0 0 1 423.8 470.28Z" fill="#6e6e6e"/>
<ellipse cx="416.39" cy="460.09" rx="2.75" ry="1.72" fill="#f4f4f4" transform="rotate(45 416.39 460.09)"/>
<rect x="172" y="521.5" width="130" height="130" rx="7" fill="#808080"/>
<rect x="175" y="524.5" width="127" height="127" rx="6" fill="#ffffff"/>
<rect x="175" y="524.5" width="125" height="125" rx="5" fill="#ffffe1"/>
<path d="M182.7 631.5A99.3 99.3 0 0 1 182.94 624.64L192.71 625.32A89.5 89.5 0 0 0 192.5 631.5Z" fill="#ff0000"/>
<line x1="183" y1="631.5" x2="196" y2="631.5" stroke="#8c8c8c" stroke-width="1.8" stroke-linecap="butt"/>
<line x1="183.2" y1="625.28" x2="191.18" y2="625.79" stroke="#9c9c96" stroke-width="1.15" stroke-linecap="butt"/>
<line x1="183.78" y1="619.09" x2="191.72" y2="620.09" stroke="#9c9c96" stroke-width="1.15" stroke-linecap="butt"/>
<line x1="184.75" y1="612.95" x2="192.61" y2="614.45" stroke="#9c9c96" stroke-width="1.15" stroke-linecap="butt"/>
<line x1="186.11" y1="606.88" x2="193.86" y2="608.87" stroke="#9c9c96" stroke-width="1.15" stroke-linecap="butt"/>
<line x1="187.56" y1="600.81" x2="200.49" y2="605.02" stroke="#787878" stroke-width="2.7" stroke-linecap="butt"/>
<line x1="189.95" y1="595.06" x2="197.39" y2="598" stroke="#9c9c96" stroke-width="1.15" stroke-linecap="butt"/>
<line x1="192.42" y1="589.35" x2="199.66" y2="592.75" stroke="#9c9c96" stroke-width="1.15" stroke-linecap="butt"/>
<line x1="195.25" y1="583.81" x2="202.26" y2="587.66" stroke="#9c9c96" stroke-width="1.15" stroke-linecap="butt"/>
<line x1="198.41" y1="578.45" x2="205.17" y2="582.74" stroke="#9c9c96" stroke-width="1.15" stroke-linecap="butt"/>
<line x1="201.66" y1="573.13" x2="212.67" y2="581.13" stroke="#787878" stroke-width="2.7" stroke-linecap="butt"/>
<line x1="205.72" y1="568.4" x2="211.88" y2="573.49" stroke="#9c9c96" stroke-width="1.15" stroke-linecap="butt"/>
<line x1="209.83" y1="563.73" x2="215.66" y2="569.21" stroke="#9c9c96" stroke-width="1.15" stroke-linecap="butt"/>
<line x1="214.23" y1="559.33" x2="219.71" y2="565.16" stroke="#9c9c96" stroke-width="1.15" stroke-linecap="butt"/>
<line x1="218.9" y1="555.22" x2="223.99" y2="561.38" stroke="#9c9c96" stroke-width="1.15" stroke-linecap="butt"/>
<line x1="223.63" y1="551.16" x2="231.63" y2="562.17" stroke="#787878" stroke-width="2.7" stroke-linecap="butt"/>
<line x1="228.95" y1="547.91" x2="233.24" y2="554.67" stroke="#9c9c96" stroke-width="1.15" stroke-linecap="butt"/>
<line x1="234.31" y1="544.75" x2="238.16" y2="551.76" stroke="#9c9c96" stroke-width="1.15" stroke-linecap="butt"/>
<line x1="239.85" y1="541.92" x2="243.25" y2="549.16" stroke="#9c9c96" stroke-width="1.15" stroke-linecap="butt"/>
<line x1="245.56" y1="539.45" x2="248.5" y2="546.89" stroke="#9c9c96" stroke-width="1.15" stroke-linecap="butt"/>
<line x1="251.31" y1="537.06" x2="255.52" y2="549.99" stroke="#787878" stroke-width="2.7" stroke-linecap="butt"/>
<line x1="257.38" y1="535.61" x2="259.37" y2="543.36" stroke="#9c9c96" stroke-width="1.15" stroke-linecap="butt"/>
<line x1="263.45" y1="534.25" x2="264.95" y2="542.11" stroke="#9c9c96" stroke-width="1.15" stroke-linecap="butt"/>
<line x1="269.59" y1="533.28" x2="270.59" y2="541.22" stroke="#9c9c96" stroke-width="1.15" stroke-linecap="butt"/>
<line x1="275.78" y1="532.7" x2="276.29" y2="540.68" stroke="#9c9c96" stroke-width="1.15" stroke-linecap="butt"/>
<line x1="282" y1="532.5" x2="282" y2="545.5" stroke="#8c8c8c" stroke-width="1.8" stroke-linecap="butt"/>
<text x="204" y="630" font-size="15.7" fill="#111" font-weight="normal" text-anchor="start" textLength="7.32" lengthAdjust="spacingAndGlyphs">0</text>
<text x="207.5" y="615.5" font-size="15.7" fill="#111" font-weight="normal" text-anchor="start" textLength="15.74" lengthAdjust="spacingAndGlyphs">10</text>
<text x="218.9" y="594" font-size="15.7" fill="#111" font-weight="normal" text-anchor="start" textLength="15.74" lengthAdjust="spacingAndGlyphs">20</text>
<text x="235.2" y="576.9" font-size="15.7" fill="#111" font-weight="normal" text-anchor="start" textLength="15.74" lengthAdjust="spacingAndGlyphs">30</text>
<text x="257.9" y="565.7" font-size="15.7" fill="#111" font-weight="normal" text-anchor="start" textLength="15.74" lengthAdjust="spacingAndGlyphs">40</text>
<text x="273.2" y="562.5" font-size="15.7" fill="#111" font-weight="normal" text-anchor="start" textLength="15.74" lengthAdjust="spacingAndGlyphs">50</text>
<text x="249.6" y="614" font-size="16.1" fill="#111" font-weight="normal" text-anchor="start">psi</text>
<line x1="282" y1="631.5" x2="188.4" y2="631.5" stroke="#000080" stroke-width="2.3" stroke-linecap="butt"/>
<circle cx="282" cy="631.5" r="8.6" fill="#a9a9a9" stroke="#3a3a3a" stroke-width="1.2"/>
<path d="M282 631.5L289.34 633.47A7.6 7.6 0 0 1 285.8 638.08Z" fill="#6e6e6e"/>
<ellipse cx="278.39" cy="627.89" rx="2.75" ry="1.72" fill="#f4f4f4" transform="rotate(45 278.39 627.89)"/>
<rect x="310" y="521.5" width="130" height="130" rx="7" fill="#808080"/>
<rect x="313" y="524.5" width="127" height="127" rx="6" fill="#ffffff"/>
<rect x="313" y="524.5" width="125" height="125" rx="5" fill="#ffffe1"/>
<path d="M320.7 631.5A99.3 99.3 0 0 1 321.69 617.51L331.39 618.89A89.5 89.5 0 0 0 330.5 631.5Z" fill="#c2c2c2"/>
<line x1="321" y1="631.5" x2="334" y2="631.5" stroke="#8c8c8c" stroke-width="1.8" stroke-linecap="butt"/>
<line x1="322.22" y1="616.01" x2="330.12" y2="617.26" stroke="#9c9c96" stroke-width="1.15" stroke-linecap="butt"/>
<line x1="325.85" y1="600.91" x2="333.45" y2="603.38" stroke="#9c9c96" stroke-width="1.15" stroke-linecap="butt"/>
<line x1="331.79" y1="586.55" x2="338.92" y2="590.19" stroke="#9c9c96" stroke-width="1.15" stroke-linecap="butt"/>
<line x1="339.91" y1="573.31" x2="346.38" y2="578.01" stroke="#9c9c96" stroke-width="1.15" stroke-linecap="butt"/>
<line x1="349.78" y1="561.28" x2="359.4" y2="570.9" stroke="#787878" stroke-width="2.7" stroke-linecap="butt"/>
<line x1="361.81" y1="551.41" x2="366.51" y2="557.88" stroke="#9c9c96" stroke-width="1.15" stroke-linecap="butt"/>
<line x1="375.05" y1="543.29" x2="378.69" y2="550.42" stroke="#9c9c96" stroke-width="1.15" stroke-linecap="butt"/>
<line x1="389.41" y1="537.35" x2="391.88" y2="544.95" stroke="#9c9c96" stroke-width="1.15" stroke-linecap="butt"/>
<line x1="404.51" y1="533.72" x2="405.76" y2="541.62" stroke="#9c9c96" stroke-width="1.15" stroke-linecap="butt"/>
<line x1="420" y1="532.5" x2="420" y2="545.5" stroke="#8c8c8c" stroke-width="1.8" stroke-linecap="butt"/>
<text x="341.3" y="630" font-size="15.7" fill="#111" font-weight="normal" text-anchor="start" textLength="7.32" lengthAdjust="spacingAndGlyphs">0</text>
<text x="363.3" y="585" font-size="15.7" fill="#111" font-weight="normal" text-anchor="start" textLength="24.16" lengthAdjust="spacingAndGlyphs">200</text>
<text x="408.3" y="562.5" font-size="15.7" fill="#111" font-weight="normal" text-anchor="start" textLength="24.16" lengthAdjust="spacingAndGlyphs">400</text>
<text x="387.6" y="614" font-size="16.1" fill="#111" font-weight="normal" text-anchor="start">psi</text>
<line x1="420" y1="631.5" x2="348.8" y2="572.6" stroke="#000080" stroke-width="2.3" stroke-linecap="butt"/>
<circle cx="420" cy="631.5" r="8.6" fill="#a9a9a9" stroke="#3a3a3a" stroke-width="1.2"/>
<path d="M420 631.5L427.34 633.47A7.6 7.6 0 0 1 423.8 638.08Z" fill="#6e6e6e"/>
<ellipse cx="416.39" cy="627.89" rx="2.75" ry="1.72" fill="#f4f4f4" transform="rotate(45 416.39 627.89)"/>
<rect x="614.7" y="186" width="130" height="130" rx="7" fill="#808080"/>
<rect x="617.7" y="189" width="127" height="127" rx="6" fill="#ffffff"/>
<rect x="617.7" y="189" width="125" height="125" rx="5" fill="#ffffe1"/>
<path d="M625.4 296A99.3 99.3 0 0 1 697.3 200.56L700 209.98A89.5 89.5 0 0 0 635.2 296Z" fill="#c2c2c2"/>
<path d="M715.36 197.14A99.3 99.3 0 0 1 724.7 196.7L724.7 206.5A89.5 89.5 0 0 0 716.28 206.9Z" fill="#c2c2c2"/>
<line x1="625.7" y1="296" x2="638.7" y2="296" stroke="#8c8c8c" stroke-width="1.8" stroke-linecap="butt"/>
<line x1="626.92" y1="280.51" x2="634.82" y2="281.76" stroke="#9c9c96" stroke-width="1.15" stroke-linecap="butt"/>
<line x1="630.55" y1="265.41" x2="638.15" y2="267.88" stroke="#9c9c96" stroke-width="1.15" stroke-linecap="butt"/>
<line x1="636.49" y1="251.05" x2="643.62" y2="254.69" stroke="#9c9c96" stroke-width="1.15" stroke-linecap="butt"/>
<line x1="644.61" y1="237.81" x2="651.08" y2="242.51" stroke="#9c9c96" stroke-width="1.15" stroke-linecap="butt"/>
<line x1="654.48" y1="225.78" x2="664.1" y2="235.4" stroke="#787878" stroke-width="2.7" stroke-linecap="butt"/>
<line x1="666.51" y1="215.91" x2="671.21" y2="222.38" stroke="#9c9c96" stroke-width="1.15" stroke-linecap="butt"/>
<line x1="679.75" y1="207.79" x2="683.39" y2="214.92" stroke="#9c9c96" stroke-width="1.15" stroke-linecap="butt"/>
<line x1="694.11" y1="201.85" x2="696.58" y2="209.45" stroke="#9c9c96" stroke-width="1.15" stroke-linecap="butt"/>
<line x1="709.21" y1="198.22" x2="710.46" y2="206.12" stroke="#9c9c96" stroke-width="1.15" stroke-linecap="butt"/>
<line x1="724.7" y1="197" x2="724.7" y2="210" stroke="#8c8c8c" stroke-width="1.8" stroke-linecap="butt"/>
<text x="646.7" y="294.3" font-size="15.7" fill="#111" font-weight="normal" text-anchor="start" textLength="7.32" lengthAdjust="spacingAndGlyphs">0</text>
<text x="668.9" y="249.3" font-size="15.7" fill="#111" font-weight="normal" text-anchor="start" textLength="24.16" lengthAdjust="spacingAndGlyphs">500</text>
<text x="707.7" y="227.3" font-size="15.7" fill="#111" font-weight="normal" text-anchor="start" textLength="32.58" lengthAdjust="spacingAndGlyphs">1000</text>
<text x="692.3" y="278.5" font-size="16.1" fill="#111" font-weight="normal" text-anchor="start">psi</text>
<line x1="724.7" y1="296" x2="711.68" y2="202.4" stroke="#000080" stroke-width="2.3" stroke-linecap="butt"/>
<circle cx="724.7" cy="296" r="8.6" fill="#a9a9a9" stroke="#3a3a3a" stroke-width="1.2"/>
<path d="M724.7 296L732.04 297.97A7.6 7.6 0 0 1 728.5 302.58Z" fill="#6e6e6e"/>
<ellipse cx="721.09" cy="292.39" rx="2.75" ry="1.72" fill="#f4f4f4" transform="rotate(45 721.09 292.39)"/>
<rect x="752.3" y="186" width="130" height="130" rx="7" fill="#808080"/>
<rect x="755.3" y="189" width="127" height="127" rx="6" fill="#ffffff"/>
<rect x="755.3" y="189" width="125" height="125" rx="5" fill="#ffffe1"/>
<path d="M763 296A99.3 99.3 0 0 1 834.9 200.56L837.6 209.98A89.5 89.5 0 0 0 772.8 296Z" fill="#c2c2c2"/>
<path d="M852.96 197.14A99.3 99.3 0 0 1 862.3 196.7L862.3 206.5A89.5 89.5 0 0 0 853.88 206.9Z" fill="#c2c2c2"/>
<line x1="763.3" y1="296" x2="776.3" y2="296" stroke="#8c8c8c" stroke-width="1.8" stroke-linecap="butt"/>
<line x1="764.52" y1="280.51" x2="772.42" y2="281.76" stroke="#9c9c96" stroke-width="1.15" stroke-linecap="butt"/>
<line x1="768.15" y1="265.41" x2="775.75" y2="267.88" stroke="#9c9c96" stroke-width="1.15" stroke-linecap="butt"/>
<line x1="774.09" y1="251.05" x2="781.22" y2="254.69" stroke="#9c9c96" stroke-width="1.15" stroke-linecap="butt"/>
<line x1="782.21" y1="237.81" x2="788.68" y2="242.51" stroke="#9c9c96" stroke-width="1.15" stroke-linecap="butt"/>
<line x1="792.08" y1="225.78" x2="801.7" y2="235.4" stroke="#787878" stroke-width="2.7" stroke-linecap="butt"/>
<line x1="804.11" y1="215.91" x2="808.81" y2="222.38" stroke="#9c9c96" stroke-width="1.15" stroke-linecap="butt"/>
<line x1="817.35" y1="207.79" x2="820.99" y2="214.92" stroke="#9c9c96" stroke-width="1.15" stroke-linecap="butt"/>
<line x1="831.71" y1="201.85" x2="834.18" y2="209.45" stroke="#9c9c96" stroke-width="1.15" stroke-linecap="butt"/>
<line x1="846.81" y1="198.22" x2="848.06" y2="206.12" stroke="#9c9c96" stroke-width="1.15" stroke-linecap="butt"/>
<line x1="862.3" y1="197" x2="862.3" y2="210" stroke="#8c8c8c" stroke-width="1.8" stroke-linecap="butt"/>
<text x="784.3" y="294.3" font-size="15.7" fill="#111" font-weight="normal" text-anchor="start" textLength="7.32" lengthAdjust="spacingAndGlyphs">0</text>
<text x="806.5" y="249.3" font-size="15.7" fill="#111" font-weight="normal" text-anchor="start" textLength="24.16" lengthAdjust="spacingAndGlyphs">500</text>
<text x="845.3" y="227.3" font-size="15.7" fill="#111" font-weight="normal" text-anchor="start" textLength="32.58" lengthAdjust="spacingAndGlyphs">1000</text>
<text x="829.9" y="278.5" font-size="16.1" fill="#111" font-weight="normal" text-anchor="start">psi</text>
<line x1="862.3" y1="296" x2="849.28" y2="202.4" stroke="#000080" stroke-width="2.3" stroke-linecap="butt"/>
<circle cx="862.3" cy="296" r="8.6" fill="#a9a9a9" stroke="#3a3a3a" stroke-width="1.2"/>
<path d="M862.3 296L869.64 297.97A7.6 7.6 0 0 1 866.1 302.58Z" fill="#6e6e6e"/>
<ellipse cx="858.69" cy="292.39" rx="2.75" ry="1.72" fill="#f4f4f4" transform="rotate(45 858.69 292.39)"/>
<rect x="612.3" y="353.7" width="130" height="130" rx="7" fill="#808080"/>
<rect x="615.3" y="356.7" width="127" height="127" rx="6" fill="#ffffff"/>
<rect x="615.3" y="356.7" width="125" height="125" rx="5" fill="#ffffe1"/>
<line x1="623.3" y1="463.7" x2="636.3" y2="463.7" stroke="#8c8c8c" stroke-width="1.8" stroke-linecap="butt"/>
<line x1="624.52" y1="448.21" x2="632.42" y2="449.46" stroke="#9c9c96" stroke-width="1.15" stroke-linecap="butt"/>
<line x1="628.15" y1="433.11" x2="635.75" y2="435.58" stroke="#9c9c96" stroke-width="1.15" stroke-linecap="butt"/>
<line x1="634.09" y1="418.75" x2="641.22" y2="422.39" stroke="#9c9c96" stroke-width="1.15" stroke-linecap="butt"/>
<line x1="642.21" y1="405.51" x2="648.68" y2="410.21" stroke="#9c9c96" stroke-width="1.15" stroke-linecap="butt"/>
<line x1="652.08" y1="393.48" x2="661.7" y2="403.1" stroke="#787878" stroke-width="2.7" stroke-linecap="butt"/>
<line x1="664.11" y1="383.61" x2="668.81" y2="390.08" stroke="#9c9c96" stroke-width="1.15" stroke-linecap="butt"/>
<line x1="677.35" y1="375.49" x2="680.99" y2="382.62" stroke="#9c9c96" stroke-width="1.15" stroke-linecap="butt"/>
<line x1="691.71" y1="369.55" x2="694.18" y2="377.15" stroke="#9c9c96" stroke-width="1.15" stroke-linecap="butt"/>
<line x1="706.81" y1="365.92" x2="708.06" y2="373.82" stroke="#9c9c96" stroke-width="1.15" stroke-linecap="butt"/>
<line x1="722.3" y1="364.7" x2="722.3" y2="377.7" stroke="#8c8c8c" stroke-width="1.8" stroke-linecap="butt"/>
<text x="644.3" y="462" font-size="15.7" fill="#111" font-weight="normal" text-anchor="start" textLength="7.32" lengthAdjust="spacingAndGlyphs">0</text>
<text x="666.5" y="417" font-size="15.7" fill="#111" font-weight="normal" text-anchor="start" textLength="24.16" lengthAdjust="spacingAndGlyphs">500</text>
<text x="705.3" y="395" font-size="15.7" fill="#111" font-weight="normal" text-anchor="start" textLength="32.58" lengthAdjust="spacingAndGlyphs">1000</text>
<text x="689.9" y="446.2" font-size="16.1" fill="#111" font-weight="normal" text-anchor="start">psi</text>
<line x1="722.3" y1="463.7" x2="705.84" y2="372.78" stroke="#000080" stroke-width="2.3" stroke-linecap="butt"/>
<circle cx="722.3" cy="463.7" r="8.6" fill="#a9a9a9" stroke="#3a3a3a" stroke-width="1.2"/>
<path d="M722.3 463.7L729.64 465.67A7.6 7.6 0 0 1 726.1 470.28Z" fill="#6e6e6e"/>
<ellipse cx="718.69" cy="460.09" rx="2.75" ry="1.72" fill="#f4f4f4" transform="rotate(45 718.69 460.09)"/>
<rect x="752.3" y="353.7" width="130" height="130" rx="7" fill="#808080"/>
<rect x="755.3" y="356.7" width="127" height="127" rx="6" fill="#ffffff"/>
<rect x="755.3" y="356.7" width="125" height="125" rx="5" fill="#ffffe1"/>
<line x1="763.3" y1="463.7" x2="776.3" y2="463.7" stroke="#8c8c8c" stroke-width="1.8" stroke-linecap="butt"/>
<line x1="764.52" y1="448.21" x2="772.42" y2="449.46" stroke="#9c9c96" stroke-width="1.15" stroke-linecap="butt"/>
<line x1="768.15" y1="433.11" x2="775.75" y2="435.58" stroke="#9c9c96" stroke-width="1.15" stroke-linecap="butt"/>
<line x1="774.09" y1="418.75" x2="781.22" y2="422.39" stroke="#9c9c96" stroke-width="1.15" stroke-linecap="butt"/>
<line x1="782.21" y1="405.51" x2="788.68" y2="410.21" stroke="#9c9c96" stroke-width="1.15" stroke-linecap="butt"/>
<line x1="792.08" y1="393.48" x2="801.7" y2="403.1" stroke="#787878" stroke-width="2.7" stroke-linecap="butt"/>
<line x1="804.11" y1="383.61" x2="808.81" y2="390.08" stroke="#9c9c96" stroke-width="1.15" stroke-linecap="butt"/>
<line x1="817.35" y1="375.49" x2="820.99" y2="382.62" stroke="#9c9c96" stroke-width="1.15" stroke-linecap="butt"/>
<line x1="831.71" y1="369.55" x2="834.18" y2="377.15" stroke="#9c9c96" stroke-width="1.15" stroke-linecap="butt"/>
<line x1="846.81" y1="365.92" x2="848.06" y2="373.82" stroke="#9c9c96" stroke-width="1.15" stroke-linecap="butt"/>
<line x1="862.3" y1="364.7" x2="862.3" y2="377.7" stroke="#8c8c8c" stroke-width="1.8" stroke-linecap="butt"/>
<text x="784.3" y="462" font-size="15.7" fill="#111" font-weight="normal" text-anchor="start" textLength="7.32" lengthAdjust="spacingAndGlyphs">0</text>
<text x="806.5" y="417" font-size="15.7" fill="#111" font-weight="normal" text-anchor="start" textLength="24.16" lengthAdjust="spacingAndGlyphs">500</text>
<text x="845.3" y="395" font-size="15.7" fill="#111" font-weight="normal" text-anchor="start" textLength="32.58" lengthAdjust="spacingAndGlyphs">1000</text>
<text x="832.3" y="446.2" font-size="16.1" fill="#111" font-weight="normal" text-anchor="start">°F</text>
<line x1="862.3" y1="463.7" x2="832.03" y2="373.44" stroke="#000080" stroke-width="2.3" stroke-linecap="butt"/>
<circle cx="862.3" cy="463.7" r="8.6" fill="#a9a9a9" stroke="#3a3a3a" stroke-width="1.2"/>
<path d="M862.3 463.7L869.64 465.67A7.6 7.6 0 0 1 866.1 470.28Z" fill="#6e6e6e"/>
<ellipse cx="858.69" cy="460.09" rx="2.75" ry="1.72" fill="#f4f4f4" transform="rotate(45 858.69 460.09)"/>
<rect x="612.3" y="521.5" width="130" height="130" rx="7" fill="#808080"/>
<rect x="615.3" y="524.5" width="127" height="127" rx="6" fill="#ffffff"/>
<rect x="615.3" y="524.5" width="125" height="125" rx="5" fill="#ffffe1"/>
<path d="M623 631.5A99.3 99.3 0 0 1 623.99 617.51L633.69 618.89A89.5 89.5 0 0 0 632.8 631.5Z" fill="#c2c2c2"/>
<line x1="623.3" y1="631.5" x2="636.3" y2="631.5" stroke="#8c8c8c" stroke-width="1.8" stroke-linecap="butt"/>
<line x1="624.52" y1="616.01" x2="632.42" y2="617.26" stroke="#9c9c96" stroke-width="1.15" stroke-linecap="butt"/>
<line x1="628.15" y1="600.91" x2="635.75" y2="603.38" stroke="#9c9c96" stroke-width="1.15" stroke-linecap="butt"/>
<line x1="634.09" y1="586.55" x2="641.22" y2="590.19" stroke="#9c9c96" stroke-width="1.15" stroke-linecap="butt"/>
<line x1="642.21" y1="573.31" x2="648.68" y2="578.01" stroke="#9c9c96" stroke-width="1.15" stroke-linecap="butt"/>
<line x1="652.08" y1="561.28" x2="661.7" y2="570.9" stroke="#787878" stroke-width="2.7" stroke-linecap="butt"/>
<line x1="664.11" y1="551.41" x2="668.81" y2="557.88" stroke="#9c9c96" stroke-width="1.15" stroke-linecap="butt"/>
<line x1="677.35" y1="543.29" x2="680.99" y2="550.42" stroke="#9c9c96" stroke-width="1.15" stroke-linecap="butt"/>
<line x1="691.71" y1="537.35" x2="694.18" y2="544.95" stroke="#9c9c96" stroke-width="1.15" stroke-linecap="butt"/>
<line x1="706.81" y1="533.72" x2="708.06" y2="541.62" stroke="#9c9c96" stroke-width="1.15" stroke-linecap="butt"/>
<line x1="722.3" y1="532.5" x2="722.3" y2="545.5" stroke="#8c8c8c" stroke-width="1.8" stroke-linecap="butt"/>
<text x="643.6" y="630" font-size="15.7" fill="#111" font-weight="normal" text-anchor="start" textLength="7.32" lengthAdjust="spacingAndGlyphs">0</text>
<text x="665.6" y="585" font-size="15.7" fill="#111" font-weight="normal" text-anchor="start" textLength="24.16" lengthAdjust="spacingAndGlyphs">200</text>
<text x="710.6" y="562.5" font-size="15.7" fill="#111" font-weight="normal" text-anchor="start" textLength="24.16" lengthAdjust="spacingAndGlyphs">400</text>
<text x="689.9" y="614" font-size="16.1" fill="#111" font-weight="normal" text-anchor="start">psi</text>
<line x1="722.3" y1="631.5" x2="651.1" y2="572.6" stroke="#000080" stroke-width="2.3" stroke-linecap="butt"/>
<circle cx="722.3" cy="631.5" r="8.6" fill="#a9a9a9" stroke="#3a3a3a" stroke-width="1.2"/>
<path d="M722.3 631.5L729.64 633.47A7.6 7.6 0 0 1 726.1 638.08Z" fill="#6e6e6e"/>
<ellipse cx="718.69" cy="627.89" rx="2.75" ry="1.72" fill="#f4f4f4" transform="rotate(45 718.69 627.89)"/>
<rect x="752.3" y="521.5" width="130" height="130" rx="7" fill="#808080"/>
<rect x="755.3" y="524.5" width="127" height="127" rx="6" fill="#ffffff"/>
<rect x="755.3" y="524.5" width="125" height="125" rx="5" fill="#ffffe1"/>
<path d="M763 631.5A99.3 99.3 0 0 1 763.24 624.64L773.01 625.32A89.5 89.5 0 0 0 772.8 631.5Z" fill="#ff0000"/>
<line x1="763.3" y1="631.5" x2="776.3" y2="631.5" stroke="#8c8c8c" stroke-width="1.8" stroke-linecap="butt"/>
<line x1="763.5" y1="625.28" x2="771.48" y2="625.79" stroke="#9c9c96" stroke-width="1.15" stroke-linecap="butt"/>
<line x1="764.08" y1="619.09" x2="772.02" y2="620.09" stroke="#9c9c96" stroke-width="1.15" stroke-linecap="butt"/>
<line x1="765.05" y1="612.95" x2="772.91" y2="614.45" stroke="#9c9c96" stroke-width="1.15" stroke-linecap="butt"/>
<line x1="766.41" y1="606.88" x2="774.16" y2="608.87" stroke="#9c9c96" stroke-width="1.15" stroke-linecap="butt"/>
<line x1="767.86" y1="600.81" x2="780.79" y2="605.02" stroke="#787878" stroke-width="2.7" stroke-linecap="butt"/>
<line x1="770.25" y1="595.06" x2="777.69" y2="598" stroke="#9c9c96" stroke-width="1.15" stroke-linecap="butt"/>
<line x1="772.72" y1="589.35" x2="779.96" y2="592.75" stroke="#9c9c96" stroke-width="1.15" stroke-linecap="butt"/>
<line x1="775.55" y1="583.81" x2="782.56" y2="587.66" stroke="#9c9c96" stroke-width="1.15" stroke-linecap="butt"/>
<line x1="778.71" y1="578.45" x2="785.47" y2="582.74" stroke="#9c9c96" stroke-width="1.15" stroke-linecap="butt"/>
<line x1="781.96" y1="573.13" x2="792.97" y2="581.13" stroke="#787878" stroke-width="2.7" stroke-linecap="butt"/>
<line x1="786.02" y1="568.4" x2="792.18" y2="573.49" stroke="#9c9c96" stroke-width="1.15" stroke-linecap="butt"/>
<line x1="790.13" y1="563.73" x2="795.96" y2="569.21" stroke="#9c9c96" stroke-width="1.15" stroke-linecap="butt"/>
<line x1="794.53" y1="559.33" x2="800.01" y2="565.16" stroke="#9c9c96" stroke-width="1.15" stroke-linecap="butt"/>
<line x1="799.2" y1="555.22" x2="804.29" y2="561.38" stroke="#9c9c96" stroke-width="1.15" stroke-linecap="butt"/>
<line x1="803.93" y1="551.16" x2="811.93" y2="562.17" stroke="#787878" stroke-width="2.7" stroke-linecap="butt"/>
<line x1="809.25" y1="547.91" x2="813.54" y2="554.67" stroke="#9c9c96" stroke-width="1.15" stroke-linecap="butt"/>
<line x1="814.61" y1="544.75" x2="818.46" y2="551.76" stroke="#9c9c96" stroke-width="1.15" stroke-linecap="butt"/>
<line x1="820.15" y1="541.92" x2="823.55" y2="549.16" stroke="#9c9c96" stroke-width="1.15" stroke-linecap="butt"/>
<line x1="825.86" y1="539.45" x2="828.8" y2="546.89" stroke="#9c9c96" stroke-width="1.15" stroke-linecap="butt"/>
<line x1="831.61" y1="537.06" x2="835.82" y2="549.99" stroke="#787878" stroke-width="2.7" stroke-linecap="butt"/>
<line x1="837.68" y1="535.61" x2="839.67" y2="543.36" stroke="#9c9c96" stroke-width="1.15" stroke-linecap="butt"/>
<line x1="843.75" y1="534.25" x2="845.25" y2="542.11" stroke="#9c9c96" stroke-width="1.15" stroke-linecap="butt"/>
<line x1="849.89" y1="533.28" x2="850.89" y2="541.22" stroke="#9c9c96" stroke-width="1.15" stroke-linecap="butt"/>
<line x1="856.08" y1="532.7" x2="856.59" y2="540.68" stroke="#9c9c96" stroke-width="1.15" stroke-linecap="butt"/>
<line x1="862.3" y1="532.5" x2="862.3" y2="545.5" stroke="#8c8c8c" stroke-width="1.8" stroke-linecap="butt"/>
<text x="784.3" y="630" font-size="15.7" fill="#111" font-weight="normal" text-anchor="start" textLength="7.32" lengthAdjust="spacingAndGlyphs">0</text>
<text x="787.8" y="615.5" font-size="15.7" fill="#111" font-weight="normal" text-anchor="start" textLength="15.74" lengthAdjust="spacingAndGlyphs">10</text>
<text x="799.2" y="594" font-size="15.7" fill="#111" font-weight="normal" text-anchor="start" textLength="15.74" lengthAdjust="spacingAndGlyphs">20</text>
<text x="815.5" y="576.9" font-size="15.7" fill="#111" font-weight="normal" text-anchor="start" textLength="15.74" lengthAdjust="spacingAndGlyphs">30</text>
<text x="838.2" y="565.7" font-size="15.7" fill="#111" font-weight="normal" text-anchor="start" textLength="15.74" lengthAdjust="spacingAndGlyphs">40</text>
<text x="853.5" y="562.5" font-size="15.7" fill="#111" font-weight="normal" text-anchor="start" textLength="15.74" lengthAdjust="spacingAndGlyphs">50</text>
<text x="829.9" y="614" font-size="16.1" fill="#111" font-weight="normal" text-anchor="start">psi</text>
<line x1="862.3" y1="631.5" x2="768.7" y2="631.5" stroke="#000080" stroke-width="2.3" stroke-linecap="butt"/>
<circle cx="862.3" cy="631.5" r="8.6" fill="#a9a9a9" stroke="#3a3a3a" stroke-width="1.2"/>
<path d="M862.3 631.5L869.64 633.47A7.6 7.6 0 0 1 866.1 638.08Z" fill="#6e6e6e"/>
<ellipse cx="858.69" cy="627.89" rx="2.75" ry="1.72" fill="#f4f4f4" transform="rotate(45 858.69 627.89)"/>
<rect x="20" y="501" width="129" height="129" rx="7" fill="#808080"/>
<rect x="23" y="504" width="126" height="126" rx="6" fill="#ffffff"/>
<rect x="23" y="504" width="124" height="124" rx="5" fill="#ffffe1"/>
<line x1="30.92" y1="610.15" x2="43.82" y2="610.15" stroke="#8c8c8c" stroke-width="1.8" stroke-linecap="butt"/>
<line x1="32.12" y1="594.79" x2="39.97" y2="596.03" stroke="#9c9c96" stroke-width="1.15" stroke-linecap="butt"/>
<line x1="35.72" y1="579.8" x2="43.27" y2="582.25" stroke="#9c9c96" stroke-width="1.15" stroke-linecap="butt"/>
<line x1="41.62" y1="565.55" x2="48.7" y2="569.16" stroke="#9c9c96" stroke-width="1.15" stroke-linecap="butt"/>
<line x1="49.68" y1="552.41" x2="56.1" y2="557.08" stroke="#9c9c96" stroke-width="1.15" stroke-linecap="butt"/>
<line x1="59.48" y1="540.48" x2="69.02" y2="550.02" stroke="#787878" stroke-width="2.7" stroke-linecap="butt"/>
<line x1="71.41" y1="530.68" x2="76.08" y2="537.1" stroke="#9c9c96" stroke-width="1.15" stroke-linecap="butt"/>
<line x1="84.55" y1="522.62" x2="88.16" y2="529.7" stroke="#9c9c96" stroke-width="1.15" stroke-linecap="butt"/>
<line x1="98.8" y1="516.72" x2="101.25" y2="524.27" stroke="#9c9c96" stroke-width="1.15" stroke-linecap="butt"/>
<line x1="113.79" y1="513.12" x2="115.03" y2="520.97" stroke="#9c9c96" stroke-width="1.15" stroke-linecap="butt"/>
<line x1="129.15" y1="511.92" x2="129.15" y2="524.82" stroke="#8c8c8c" stroke-width="1.8" stroke-linecap="butt"/>
<text x="51.75" y="608.67" font-size="15.7" fill="#111" font-weight="normal" text-anchor="start" textLength="7.32" lengthAdjust="spacingAndGlyphs">0</text>
<text x="74.08" y="564.01" font-size="15.7" fill="#111" font-weight="normal" text-anchor="start" textLength="7.32" lengthAdjust="spacingAndGlyphs">5</text>
<text x="122.21" y="541.68" font-size="15.7" fill="#111" font-weight="normal" text-anchor="start" textLength="15.74" lengthAdjust="spacingAndGlyphs">10</text>
<text x="97" y="592.79" font-size="16.1" fill="#111" font-weight="normal" text-anchor="start">psi</text>
<line x1="129.15" y1="610.15" x2="67.07" y2="539.74" stroke="#000080" stroke-width="2.3" stroke-linecap="butt"/>
<circle cx="129.15" cy="610.15" r="8.53" fill="#a9a9a9" stroke="#3a3a3a" stroke-width="1.2"/>
<path d="M129.15 610.15L136.43 612.1A7.53 7.53 0 0 1 132.92 616.68Z" fill="#6e6e6e"/>
<ellipse cx="125.57" cy="606.57" rx="2.73" ry="1.71" fill="#f4f4f4" transform="rotate(45 125.57 606.57)"/>
<rect x="908" y="501" width="129" height="129" rx="7" fill="#808080"/>
<rect x="911" y="504" width="126" height="126" rx="6" fill="#ffffff"/>
<rect x="911" y="504" width="124" height="124" rx="5" fill="#ffffe1"/>
<line x1="918.92" y1="610.15" x2="931.82" y2="610.15" stroke="#8c8c8c" stroke-width="1.8" stroke-linecap="butt"/>
<line x1="920.12" y1="594.79" x2="927.97" y2="596.03" stroke="#9c9c96" stroke-width="1.15" stroke-linecap="butt"/>
<line x1="923.72" y1="579.8" x2="931.27" y2="582.25" stroke="#9c9c96" stroke-width="1.15" stroke-linecap="butt"/>
<line x1="929.62" y1="565.55" x2="936.7" y2="569.16" stroke="#9c9c96" stroke-width="1.15" stroke-linecap="butt"/>
<line x1="937.68" y1="552.41" x2="944.1" y2="557.08" stroke="#9c9c96" stroke-width="1.15" stroke-linecap="butt"/>
<line x1="947.48" y1="540.48" x2="957.02" y2="550.02" stroke="#787878" stroke-width="2.7" stroke-linecap="butt"/>
<line x1="959.41" y1="530.68" x2="964.08" y2="537.1" stroke="#9c9c96" stroke-width="1.15" stroke-linecap="butt"/>
<line x1="972.55" y1="522.62" x2="976.16" y2="529.7" stroke="#9c9c96" stroke-width="1.15" stroke-linecap="butt"/>
<line x1="986.8" y1="516.72" x2="989.25" y2="524.27" stroke="#9c9c96" stroke-width="1.15" stroke-linecap="butt"/>
<line x1="1001.79" y1="513.12" x2="1003.03" y2="520.97" stroke="#9c9c96" stroke-width="1.15" stroke-linecap="butt"/>
<line x1="1017.15" y1="511.92" x2="1017.15" y2="524.82" stroke="#8c8c8c" stroke-width="1.8" stroke-linecap="butt"/>
<text x="939.75" y="608.67" font-size="15.7" fill="#111" font-weight="normal" text-anchor="start" textLength="7.32" lengthAdjust="spacingAndGlyphs">0</text>
<text x="962.08" y="564.01" font-size="15.7" fill="#111" font-weight="normal" text-anchor="start" textLength="7.32" lengthAdjust="spacingAndGlyphs">5</text>
<text x="1010.21" y="541.68" font-size="15.7" fill="#111" font-weight="normal" text-anchor="start" textLength="15.74" lengthAdjust="spacingAndGlyphs">10</text>
<text x="985" y="592.79" font-size="16.1" fill="#111" font-weight="normal" text-anchor="start">psi</text>
<line x1="1017.15" y1="610.15" x2="955.07" y2="539.74" stroke="#000080" stroke-width="2.3" stroke-linecap="butt"/>
<circle cx="1017.15" cy="610.15" r="8.53" fill="#a9a9a9" stroke="#3a3a3a" stroke-width="1.2"/>
<path d="M1017.15 610.15L1024.43 612.1A7.53 7.53 0 0 1 1020.92 616.68Z" fill="#6e6e6e"/>
<ellipse cx="1013.57" cy="606.57" rx="2.73" ry="1.71" fill="#f4f4f4" transform="rotate(45 1013.57 606.57)"/>
<circle cx="55.3" cy="670.8" r="21.4" fill="url(#tgO)" stroke="#5c5c5c" stroke-width="1"/>
<circle cx="55.3" cy="670.8" r="16.9" fill="url(#tgI)" stroke="#4e4e4e" stroke-width="1.4"/>
<path d="M32.1 692.8L76.3 649.1L80.3 653.2L36 696.8Z" fill="#3c3c3c" opacity=".45"/>
<path d="M31.1 690.8L75.3 647.1L79.3 651.2L35 694.8Z" fill="url(#tgL)" stroke="#2c2c2c" stroke-width="1.1"/>
<circle cx="55.3" cy="644" r="4.4" fill="#ee0000"/>
<circle cx="54.3" cy="642.9" r="1.6" fill="#ff7070"/>
<circle cx="121.5" cy="660.7" r="21.2" fill="#6a6a6a"/>
<circle cx="121.5" cy="660.7" r="19" fill="#00ee00"/>
<circle cx="117.5" cy="658.1" r="13.5" fill="#86f486"/>
<circle cx="116.2" cy="657.3" r="7.6" fill="#ffee00"/>
<circle cx="115.2" cy="656.8" r="3.7" fill="#ffffff"/>
<circle cx="943.5" cy="670.8" r="21.4" fill="url(#tgO)" stroke="#5c5c5c" stroke-width="1"/>
<circle cx="943.5" cy="670.8" r="16.9" fill="url(#tgI)" stroke="#4e4e4e" stroke-width="1.4"/>
<path d="M920.3 692.8L964.5 649.1L968.5 653.2L924.2 696.8Z" fill="#3c3c3c" opacity=".45"/>
<path d="M919.3 690.8L963.5 647.1L967.5 651.2L923.2 694.8Z" fill="url(#tgL)" stroke="#2c2c2c" stroke-width="1.1"/>
<circle cx="943.5" cy="644" r="4.4" fill="#ee0000"/>
<circle cx="942.5" cy="642.9" r="1.6" fill="#ff7070"/>
<circle cx="1010" cy="660.7" r="21.2" fill="#6a6a6a"/>
<circle cx="1010" cy="660.7" r="19" fill="#00ee00"/>
<circle cx="1006" cy="658.1" r="13.5" fill="#86f486"/>
<circle cx="1004.7" cy="657.3" r="7.6" fill="#ffee00"/>
<circle cx="1003.7" cy="656.8" r="3.7" fill="#ffffff"/>
<rect x="448.3" y="186.5" width="67" height="449" rx="7" fill="#808080"/>
<rect x="451.3" y="189.5" width="64" height="446" rx="6" fill="#ffffff"/>
<rect x="451.3" y="189.5" width="62" height="444" rx="5" fill="#ffffe1"/>
<rect x="485.4" y="230.3" width="9" height="112.2" fill="#c2c2c2"/>
<rect x="485.4" y="492.1" width="9" height="112.2" fill="#c2c2c2"/>
<line x1="479.4" y1="604.3" x2="496.4" y2="604.3" stroke="#8c8c8c" stroke-width="1.6" stroke-linecap="butt"/>
<text x="476" y="609.7" font-size="15" fill="#111" font-weight="normal" text-anchor="end">-10</text>
<line x1="483.9" y1="585.6" x2="495.4" y2="585.6" stroke="#a0a0a0" stroke-width="1.1" stroke-linecap="butt"/>
<line x1="483.9" y1="566.9" x2="495.4" y2="566.9" stroke="#a0a0a0" stroke-width="1.1" stroke-linecap="butt"/>
<line x1="483.9" y1="548.2" x2="495.4" y2="548.2" stroke="#a0a0a0" stroke-width="1.1" stroke-linecap="butt"/>
<line x1="483.9" y1="529.5" x2="495.4" y2="529.5" stroke="#a0a0a0" stroke-width="1.1" stroke-linecap="butt"/>
<line x1="479.4" y1="510.8" x2="496.4" y2="510.8" stroke="#8c8c8c" stroke-width="1.6" stroke-linecap="butt"/>
<text x="476" y="516.2" font-size="15" fill="#111" font-weight="normal" text-anchor="end">-5</text>
<line x1="483.9" y1="492.1" x2="495.4" y2="492.1" stroke="#a0a0a0" stroke-width="1.1" stroke-linecap="butt"/>
<line x1="483.9" y1="473.4" x2="495.4" y2="473.4" stroke="#a0a0a0" stroke-width="1.1" stroke-linecap="butt"/>
<line x1="483.9" y1="454.7" x2="495.4" y2="454.7" stroke="#a0a0a0" stroke-width="1.1" stroke-linecap="butt"/>
<line x1="483.9" y1="436" x2="495.4" y2="436" stroke="#a0a0a0" stroke-width="1.1" stroke-linecap="butt"/>
<line x1="479.4" y1="417.3" x2="496.4" y2="417.3" stroke="#8c8c8c" stroke-width="1.6" stroke-linecap="butt"/>
<text x="476" y="422.7" font-size="15" fill="#111" font-weight="normal" text-anchor="end">0</text>
<line x1="483.9" y1="398.6" x2="495.4" y2="398.6" stroke="#a0a0a0" stroke-width="1.1" stroke-linecap="butt"/>
<line x1="483.9" y1="379.9" x2="495.4" y2="379.9" stroke="#a0a0a0" stroke-width="1.1" stroke-linecap="butt"/>
<line x1="483.9" y1="361.2" x2="495.4" y2="361.2" stroke="#a0a0a0" stroke-width="1.1" stroke-linecap="butt"/>
<line x1="483.9" y1="342.5" x2="495.4" y2="342.5" stroke="#a0a0a0" stroke-width="1.1" stroke-linecap="butt"/>
<line x1="479.4" y1="323.8" x2="496.4" y2="323.8" stroke="#8c8c8c" stroke-width="1.6" stroke-linecap="butt"/>
<text x="476" y="329.2" font-size="15" fill="#111" font-weight="normal" text-anchor="end">5</text>
<line x1="483.9" y1="305.1" x2="495.4" y2="305.1" stroke="#a0a0a0" stroke-width="1.1" stroke-linecap="butt"/>
<line x1="483.9" y1="286.4" x2="495.4" y2="286.4" stroke="#a0a0a0" stroke-width="1.1" stroke-linecap="butt"/>
<line x1="483.9" y1="267.7" x2="495.4" y2="267.7" stroke="#a0a0a0" stroke-width="1.1" stroke-linecap="butt"/>
<line x1="483.9" y1="249" x2="495.4" y2="249" stroke="#a0a0a0" stroke-width="1.1" stroke-linecap="butt"/>
<line x1="479.4" y1="230.3" x2="496.4" y2="230.3" stroke="#8c8c8c" stroke-width="1.6" stroke-linecap="butt"/>
<text x="476" y="235.7" font-size="15" fill="#111" font-weight="normal" text-anchor="end">10</text>
<rect x="500.5" y="229" width="4.2" height="375" fill="#000000"/>
<path d="M488 418L504.7 408.3L504.7 427.8Z" fill="#000080"/>
<text x="468.8" y="628.7" font-size="15" fill="#111" font-weight="normal" text-anchor="start">inch</text>
<rect x="535.8" y="186.5" width="67" height="449" rx="7" fill="#808080"/>
<rect x="538.8" y="189.5" width="64" height="446" rx="6" fill="#ffffff"/>
<rect x="538.8" y="189.5" width="62" height="444" rx="5" fill="#ffffe1"/>
<rect x="572.6" y="230.3" width="9" height="112.2" fill="#c2c2c2"/>
<rect x="572.6" y="492.1" width="9" height="112.2" fill="#c2c2c2"/>
<line x1="566.6" y1="604.3" x2="583.6" y2="604.3" stroke="#8c8c8c" stroke-width="1.6" stroke-linecap="butt"/>
<text x="563.3" y="609.7" font-size="15" fill="#111" font-weight="normal" text-anchor="end">-10</text>
<line x1="571.1" y1="585.6" x2="582.6" y2="585.6" stroke="#a0a0a0" stroke-width="1.1" stroke-linecap="butt"/>
<line x1="571.1" y1="566.9" x2="582.6" y2="566.9" stroke="#a0a0a0" stroke-width="1.1" stroke-linecap="butt"/>
<line x1="571.1" y1="548.2" x2="582.6" y2="548.2" stroke="#a0a0a0" stroke-width="1.1" stroke-linecap="butt"/>
<line x1="571.1" y1="529.5" x2="582.6" y2="529.5" stroke="#a0a0a0" stroke-width="1.1" stroke-linecap="butt"/>
<line x1="566.6" y1="510.8" x2="583.6" y2="510.8" stroke="#8c8c8c" stroke-width="1.6" stroke-linecap="butt"/>
<text x="563.3" y="516.2" font-size="15" fill="#111" font-weight="normal" text-anchor="end">-5</text>
<line x1="571.1" y1="492.1" x2="582.6" y2="492.1" stroke="#a0a0a0" stroke-width="1.1" stroke-linecap="butt"/>
<line x1="571.1" y1="473.4" x2="582.6" y2="473.4" stroke="#a0a0a0" stroke-width="1.1" stroke-linecap="butt"/>
<line x1="571.1" y1="454.7" x2="582.6" y2="454.7" stroke="#a0a0a0" stroke-width="1.1" stroke-linecap="butt"/>
<line x1="571.1" y1="436" x2="582.6" y2="436" stroke="#a0a0a0" stroke-width="1.1" stroke-linecap="butt"/>
<line x1="566.6" y1="417.3" x2="583.6" y2="417.3" stroke="#8c8c8c" stroke-width="1.6" stroke-linecap="butt"/>
<text x="563.3" y="422.7" font-size="15" fill="#111" font-weight="normal" text-anchor="end">0</text>
<line x1="571.1" y1="398.6" x2="582.6" y2="398.6" stroke="#a0a0a0" stroke-width="1.1" stroke-linecap="butt"/>
<line x1="571.1" y1="379.9" x2="582.6" y2="379.9" stroke="#a0a0a0" stroke-width="1.1" stroke-linecap="butt"/>
<line x1="571.1" y1="361.2" x2="582.6" y2="361.2" stroke="#a0a0a0" stroke-width="1.1" stroke-linecap="butt"/>
<line x1="571.1" y1="342.5" x2="582.6" y2="342.5" stroke="#a0a0a0" stroke-width="1.1" stroke-linecap="butt"/>
<line x1="566.6" y1="323.8" x2="583.6" y2="323.8" stroke="#8c8c8c" stroke-width="1.6" stroke-linecap="butt"/>
<text x="563.3" y="329.2" font-size="15" fill="#111" font-weight="normal" text-anchor="end">5</text>
<line x1="571.1" y1="305.1" x2="582.6" y2="305.1" stroke="#a0a0a0" stroke-width="1.1" stroke-linecap="butt"/>
<line x1="571.1" y1="286.4" x2="582.6" y2="286.4" stroke="#a0a0a0" stroke-width="1.1" stroke-linecap="butt"/>
<line x1="571.1" y1="267.7" x2="582.6" y2="267.7" stroke="#a0a0a0" stroke-width="1.1" stroke-linecap="butt"/>
<line x1="571.1" y1="249" x2="582.6" y2="249" stroke="#a0a0a0" stroke-width="1.1" stroke-linecap="butt"/>
<line x1="566.6" y1="230.3" x2="583.6" y2="230.3" stroke="#8c8c8c" stroke-width="1.6" stroke-linecap="butt"/>
<text x="563.3" y="235.7" font-size="15" fill="#111" font-weight="normal" text-anchor="end">10</text>
<rect x="587.8" y="229" width="4.2" height="375" fill="#000000"/>
<path d="M575.3 418L592 408.3L592 427.8Z" fill="#000080"/>
<text x="556.3" y="628.7" font-size="15" fill="#111" font-weight="normal" text-anchor="start">inch</text>
<rect x="284" y="681" width="50" height="50" fill="#000000"/>
<rect x="285" y="682" width="45.6" height="45.6" fill="#ffffff"/>
<rect x="288.2" y="685.2" width="42.4" height="42.4" fill="#c4c4c4"/>
<rect x="290.3" y="687.3" width="38.1" height="38.1" fill="#2c2c2c"/>
<rect x="291.3" y="688.3" width="36.3" height="36.3" fill="#ff2626"/>
<rect x="293.8" y="690.8" width="33.8" height="33.8" fill="#7c0000"/>
<rect x="293.8" y="690.8" width="30" height="30" fill="#ffd6d6"/>
<rect x="295.2" y="692.2" width="28.6" height="28.6" fill="#160000"/>
<rect x="295.2" y="692.2" width="27.9" height="27.9" fill="url(#rb)"/>
<path d="M295.2 706.2l14 -14l14 14l-14 14z" fill="url(#rg)"/>
<rect x="720.7" y="681" width="50" height="50" fill="#000000"/>
<rect x="721.7" y="682" width="45.6" height="45.6" fill="#ffffff"/>
<rect x="724.9" y="685.2" width="42.4" height="42.4" fill="#c4c4c4"/>
<rect x="727" y="687.3" width="38.1" height="38.1" fill="#2c2c2c"/>
<rect x="728" y="688.3" width="36.3" height="36.3" fill="#ff2626"/>
<rect x="730.5" y="690.8" width="33.8" height="33.8" fill="#7c0000"/>
<rect x="730.5" y="690.8" width="30" height="30" fill="#ffd6d6"/>
<rect x="731.9" y="692.2" width="28.6" height="28.6" fill="#160000"/>
<rect x="731.9" y="692.2" width="27.9" height="27.9" fill="url(#rb)"/>
<path d="M731.9 706.2l14 -14l14 14l-14 14z" fill="url(#rg)"/>
<rect x="353" y="726.7" width="57.2" height="170.2" fill="none" stroke="#f4b97c" stroke-width="2.8"/>
<rect x="452.2" y="727.2" width="56.2" height="169.2" fill="none" stroke="#800000" stroke-width="3.8"/>
<rect x="355.7" y="730" width="50" height="50" fill="#000000"/>
<rect x="356.7" y="731" width="45.6" height="45.6" fill="#ffffff"/>
<rect x="359.9" y="734.2" width="42.4" height="42.4" fill="#c4c4c4"/>
<rect x="362" y="736.3" width="38.1" height="38.1" fill="#2c2c2c"/>
<rect x="363" y="737.3" width="36.3" height="36.3" fill="#ff2626"/>
<rect x="365.5" y="739.8" width="33.8" height="33.8" fill="#7c0000"/>
<rect x="365.5" y="739.8" width="30" height="30" fill="#ffd6d6"/>
<rect x="366.9" y="741.2" width="28.6" height="28.6" fill="#160000"/>
<rect x="366.9" y="741.2" width="27.9" height="27.9" fill="url(#rb)"/>
<path d="M366.9 755.2l14 -14l14 14l-14 14z" fill="url(#rg)"/>
<rect x="355.7" y="787.3" width="50" height="50" fill="#000000"/>
<rect x="356.7" y="788.3" width="45.6" height="45.6" fill="#ffffff"/>
<rect x="359.9" y="791.5" width="42.4" height="42.4" fill="#c4c4c4"/>
<rect x="362" y="793.6" width="38.1" height="38.1" fill="#2c2c2c"/>
<rect x="363" y="794.6" width="36.3" height="36.3" fill="#ff2626"/>
<rect x="365.5" y="797.1" width="33.8" height="33.8" fill="#7c0000"/>
<rect x="365.5" y="797.1" width="30" height="30" fill="#ffd6d6"/>
<rect x="366.9" y="798.5" width="28.6" height="28.6" fill="#160000"/>
<rect x="366.9" y="798.5" width="27.9" height="27.9" fill="url(#rb)"/>
<path d="M366.9 812.5l14 -14l14 14l-14 14z" fill="url(#rg)"/>
<rect x="355.7" y="844" width="50" height="50" fill="#000000"/>
<rect x="356.7" y="845" width="45.6" height="45.6" fill="#ffffff"/>
<rect x="359.9" y="848.2" width="42.4" height="42.4" fill="#c4c4c4"/>
<rect x="362" y="850.3" width="38.1" height="38.1" fill="#2c2c2c"/>
<rect x="363" y="851.3" width="36.3" height="36.3" fill="#ff2626"/>
<rect x="365.5" y="853.8" width="33.8" height="33.8" fill="#7c0000"/>
<rect x="365.5" y="853.8" width="30" height="30" fill="#ffd6d6"/>
<rect x="366.9" y="855.2" width="28.6" height="28.6" fill="#160000"/>
<rect x="366.9" y="855.2" width="27.9" height="27.9" fill="url(#rb)"/>
<path d="M366.9 869.2l14 -14l14 14l-14 14z" fill="url(#rg)"/>
<rect x="455" y="730" width="50" height="50" fill="#000000"/>
<rect x="456" y="731" width="45.6" height="45.6" fill="#ffffff"/>
<rect x="459.2" y="734.2" width="42.4" height="42.4" fill="#c4c4c4"/>
<rect x="461.3" y="736.3" width="38.1" height="38.1" fill="#2c2c2c"/>
<rect x="462.3" y="737.3" width="36.3" height="36.3" fill="#4f9a00"/>
<rect x="464.8" y="739.8" width="33.8" height="33.8" fill="#c8ff58"/>
<rect x="464.8" y="739.8" width="31.8" height="31.8" fill="#4f9a00"/>
<rect x="465.6" y="740.6" width="30.4" height="30.4" fill="#98fb06"/>
<rect x="455" y="844" width="50" height="50" fill="#000000"/>
<rect x="456" y="845" width="45.6" height="45.6" fill="#ffffff"/>
<rect x="459.2" y="848.2" width="42.4" height="42.4" fill="#c4c4c4"/>
<rect x="461.3" y="850.3" width="38.1" height="38.1" fill="#2c2c2c"/>
<rect x="462.3" y="851.3" width="36.3" height="36.3" fill="#4f9a00"/>
<rect x="464.8" y="853.8" width="33.8" height="33.8" fill="#c8ff58"/>
<rect x="464.8" y="853.8" width="31.8" height="31.8" fill="#4f9a00"/>
<rect x="465.6" y="854.6" width="30.4" height="30.4" fill="#98fb06"/>
<circle cx="480.7" cy="803" r="21.2" fill="#6a6a6a"/>
<circle cx="480.7" cy="803" r="19" fill="#00ee00"/>
<circle cx="476.7" cy="800.4" r="13.5" fill="#86f486"/>
<circle cx="475.4" cy="799.6" r="7.6" fill="#ffee00"/>
<circle cx="474.4" cy="799.1" r="3.7" fill="#ffffff"/>
<text x="463.3" y="840" font-size="15.5" fill="#000080" font-weight="normal" text-anchor="start" textLength="35" lengthAdjust="spacingAndGlyphs">Base</text>
<rect x="546.9" y="727.2" width="56.9" height="169.2" fill="none" stroke="#800000" stroke-width="3.8"/>
<rect x="647.1" y="726.7" width="57.2" height="170.2" fill="none" stroke="#f4b97c" stroke-width="2.8"/>
<rect x="650.5" y="730" width="50" height="50" fill="#000000"/>
<rect x="651.5" y="731" width="45.6" height="45.6" fill="#ffffff"/>
<rect x="654.7" y="734.2" width="42.4" height="42.4" fill="#c4c4c4"/>
<rect x="656.8" y="736.3" width="38.1" height="38.1" fill="#2c2c2c"/>
<rect x="657.8" y="737.3" width="36.3" height="36.3" fill="#ff2626"/>
<rect x="660.3" y="739.8" width="33.8" height="33.8" fill="#7c0000"/>
<rect x="660.3" y="739.8" width="30" height="30" fill="#ffd6d6"/>
<rect x="661.7" y="741.2" width="28.6" height="28.6" fill="#160000"/>
<rect x="661.7" y="741.2" width="27.9" height="27.9" fill="url(#rb)"/>
<path d="M661.7 755.2l14 -14l14 14l-14 14z" fill="url(#rg)"/>
<rect x="650.5" y="787.3" width="50" height="50" fill="#000000"/>
<rect x="651.5" y="788.3" width="45.6" height="45.6" fill="#ffffff"/>
<rect x="654.7" y="791.5" width="42.4" height="42.4" fill="#c4c4c4"/>
<rect x="656.8" y="793.6" width="38.1" height="38.1" fill="#2c2c2c"/>
<rect x="657.8" y="794.6" width="36.3" height="36.3" fill="#ff2626"/>
<rect x="660.3" y="797.1" width="33.8" height="33.8" fill="#7c0000"/>
<rect x="660.3" y="797.1" width="30" height="30" fill="#ffd6d6"/>
<rect x="661.7" y="798.5" width="28.6" height="28.6" fill="#160000"/>
<rect x="661.7" y="798.5" width="27.9" height="27.9" fill="url(#rb)"/>
<path d="M661.7 812.5l14 -14l14 14l-14 14z" fill="url(#rg)"/>
<rect x="650.5" y="844" width="50" height="50" fill="#000000"/>
<rect x="651.5" y="845" width="45.6" height="45.6" fill="#ffffff"/>
<rect x="654.7" y="848.2" width="42.4" height="42.4" fill="#c4c4c4"/>
<rect x="656.8" y="850.3" width="38.1" height="38.1" fill="#2c2c2c"/>
<rect x="657.8" y="851.3" width="36.3" height="36.3" fill="#ff2626"/>
<rect x="660.3" y="853.8" width="33.8" height="33.8" fill="#7c0000"/>
<rect x="660.3" y="853.8" width="30" height="30" fill="#ffd6d6"/>
<rect x="661.7" y="855.2" width="28.6" height="28.6" fill="#160000"/>
<rect x="661.7" y="855.2" width="27.9" height="27.9" fill="url(#rb)"/>
<path d="M661.7 869.2l14 -14l14 14l-14 14z" fill="url(#rg)"/>
<rect x="550.3" y="730" width="50" height="50" fill="#000000"/>
<rect x="551.3" y="731" width="45.6" height="45.6" fill="#ffffff"/>
<rect x="554.5" y="734.2" width="42.4" height="42.4" fill="#c4c4c4"/>
<rect x="556.6" y="736.3" width="38.1" height="38.1" fill="#2c2c2c"/>
<rect x="557.6" y="737.3" width="36.3" height="36.3" fill="#4f9a00"/>
<rect x="560.1" y="739.8" width="33.8" height="33.8" fill="#c8ff58"/>
<rect x="560.1" y="739.8" width="31.8" height="31.8" fill="#4f9a00"/>
<rect x="560.9" y="740.6" width="30.4" height="30.4" fill="#98fb06"/>
<rect x="550.3" y="844" width="50" height="50" fill="#000000"/>
<rect x="551.3" y="845" width="45.6" height="45.6" fill="#ffffff"/>
<rect x="554.5" y="848.2" width="42.4" height="42.4" fill="#c4c4c4"/>
<rect x="556.6" y="850.3" width="38.1" height="38.1" fill="#2c2c2c"/>
<rect x="557.6" y="851.3" width="36.3" height="36.3" fill="#4f9a00"/>
<rect x="560.1" y="853.8" width="33.8" height="33.8" fill="#c8ff58"/>
<rect x="560.1" y="853.8" width="31.8" height="31.8" fill="#4f9a00"/>
<rect x="560.9" y="854.6" width="30.4" height="30.4" fill="#98fb06"/>
<circle cx="575" cy="802.7" r="21.2" fill="#6a6a6a"/>
<circle cx="575" cy="802.7" r="19" fill="#00ee00"/>
<circle cx="571" cy="800.1" r="13.5" fill="#86f486"/>
<circle cx="569.7" cy="799.3" r="7.6" fill="#ffee00"/>
<circle cx="568.7" cy="798.8" r="3.7" fill="#ffffff"/>
<text x="556.7" y="840" font-size="15.5" fill="#000080" font-weight="normal" text-anchor="start" textLength="35.5" lengthAdjust="spacingAndGlyphs">Base</text>
<circle cx="84.2" cy="797.7" r="36" fill="#c0c0c0" stroke="#101010" stroke-width="1.2"/>
<path d="M56.75 781.85A31.7 31.7 0 0 1 83.09 766.02" fill="none" stroke="#ffffff" stroke-width="7"/>
<path d="M52.81 802.11A31.7 31.7 0 0 1 53.89 788.43" fill="none" stroke="#ffffff" stroke-width="7"/>
<path d="M111.08 780.9A31.7 31.7 0 0 1 72.32 827.09" fill="none" stroke="#858585" stroke-width="7"/>
<circle cx="84.5" cy="797.7" r="28" fill="#c0c0c0"/>
<path d="M64.7 817.5A28 28 0 0 1 102.5 776.25" fill="none" stroke="#ffffff" stroke-width="1.6"/>
<path d="M102.5 776.25A28 28 0 1 1 64.7 817.5" fill="none" stroke="#151515" stroke-width="1.6"/>
<line x1="56.98" y1="824.92" x2="55.21" y2="826.69" stroke="#303030" stroke-width="1.3" stroke-linecap="butt"/>
<line x1="47.58" y1="809.6" x2="45.21" y2="810.37" stroke="#303030" stroke-width="1.3" stroke-linecap="butt"/>
<line x1="46.17" y1="791.68" x2="43.7" y2="791.29" stroke="#303030" stroke-width="1.3" stroke-linecap="butt"/>
<line x1="53.05" y1="775.07" x2="51.03" y2="773.6" stroke="#303030" stroke-width="1.3" stroke-linecap="butt"/>
<line x1="66.72" y1="763.4" x2="65.59" y2="761.17" stroke="#303030" stroke-width="1.3" stroke-linecap="butt"/>
<line x1="84.2" y1="759.2" x2="84.2" y2="756.7" stroke="#303030" stroke-width="1.3" stroke-linecap="butt"/>
<line x1="101.68" y1="763.4" x2="102.81" y2="761.17" stroke="#303030" stroke-width="1.3" stroke-linecap="butt"/>
<line x1="115.35" y1="775.07" x2="117.37" y2="773.6" stroke="#303030" stroke-width="1.3" stroke-linecap="butt"/>
<line x1="122.23" y1="791.68" x2="124.7" y2="791.29" stroke="#303030" stroke-width="1.3" stroke-linecap="butt"/>
<line x1="120.82" y1="809.6" x2="123.19" y2="810.37" stroke="#303030" stroke-width="1.3" stroke-linecap="butt"/>
<line x1="111.42" y1="824.92" x2="113.19" y2="826.69" stroke="#303030" stroke-width="1.3" stroke-linecap="butt"/>
<text x="84.5" y="754.7" font-size="15" fill="#111" font-weight="normal" text-anchor="middle">0</text>
<text x="65.5" y="760.7" font-size="15" fill="#111" font-weight="normal" text-anchor="end">-1</text>
<text x="103" y="760.7" font-size="15" fill="#111" font-weight="normal" text-anchor="start">1</text>
<text x="48.2" y="775.7" font-size="15" fill="#111" font-weight="normal" text-anchor="end">-2</text>
<text x="122.4" y="775.7" font-size="15" fill="#111" font-weight="normal" text-anchor="start">2</text>
<text x="39" y="798.3" font-size="15" fill="#111" font-weight="normal" text-anchor="end">-3</text>
<text x="131.2" y="798.3" font-size="15" fill="#111" font-weight="normal" text-anchor="start">3</text>
<text x="42" y="821.7" font-size="15" fill="#111" font-weight="normal" text-anchor="end">-4</text>
<text x="129" y="821.7" font-size="15" fill="#111" font-weight="normal" text-anchor="start">4</text>
<text x="54.4" y="841.7" font-size="15" fill="#111" font-weight="normal" text-anchor="end">-5</text>
<text x="116" y="841.7" font-size="15" fill="#111" font-weight="normal" text-anchor="start">5</text>
<circle cx="84.2" cy="777" r="3.9" fill="#ff0000"/>
<circle cx="252.7" cy="797.7" r="36" fill="#c0c0c0" stroke="#101010" stroke-width="1.2"/>
<path d="M225.25 781.85A31.7 31.7 0 0 1 251.59 766.02" fill="none" stroke="#ffffff" stroke-width="7"/>
<path d="M221.31 802.11A31.7 31.7 0 0 1 222.39 788.43" fill="none" stroke="#ffffff" stroke-width="7"/>
<path d="M279.58 780.9A31.7 31.7 0 0 1 240.82 827.09" fill="none" stroke="#858585" stroke-width="7"/>
<circle cx="253" cy="797.7" r="28" fill="#c0c0c0"/>
<path d="M233.2 817.5A28 28 0 0 1 271 776.25" fill="none" stroke="#ffffff" stroke-width="1.6"/>
<path d="M271 776.25A28 28 0 1 1 233.2 817.5" fill="none" stroke="#151515" stroke-width="1.6"/>
<line x1="225.48" y1="824.92" x2="223.71" y2="826.69" stroke="#303030" stroke-width="1.3" stroke-linecap="butt"/>
<line x1="216.08" y1="809.6" x2="213.71" y2="810.37" stroke="#303030" stroke-width="1.3" stroke-linecap="butt"/>
<line x1="214.67" y1="791.68" x2="212.2" y2="791.29" stroke="#303030" stroke-width="1.3" stroke-linecap="butt"/>
<line x1="221.55" y1="775.07" x2="219.53" y2="773.6" stroke="#303030" stroke-width="1.3" stroke-linecap="butt"/>
<line x1="235.22" y1="763.4" x2="234.09" y2="761.17" stroke="#303030" stroke-width="1.3" stroke-linecap="butt"/>
<line x1="252.7" y1="759.2" x2="252.7" y2="756.7" stroke="#303030" stroke-width="1.3" stroke-linecap="butt"/>
<line x1="270.18" y1="763.4" x2="271.31" y2="761.17" stroke="#303030" stroke-width="1.3" stroke-linecap="butt"/>
<line x1="283.85" y1="775.07" x2="285.87" y2="773.6" stroke="#303030" stroke-width="1.3" stroke-linecap="butt"/>
<line x1="290.73" y1="791.68" x2="293.2" y2="791.29" stroke="#303030" stroke-width="1.3" stroke-linecap="butt"/>
<line x1="289.32" y1="809.6" x2="291.69" y2="810.37" stroke="#303030" stroke-width="1.3" stroke-linecap="butt"/>
<line x1="279.92" y1="824.92" x2="281.69" y2="826.69" stroke="#303030" stroke-width="1.3" stroke-linecap="butt"/>
<text x="253" y="754.7" font-size="15" fill="#111" font-weight="normal" text-anchor="middle">0</text>
<text x="234" y="760.7" font-size="15" fill="#111" font-weight="normal" text-anchor="end">-1</text>
<text x="271.5" y="760.7" font-size="15" fill="#111" font-weight="normal" text-anchor="start">1</text>
<text x="216.7" y="775.7" font-size="15" fill="#111" font-weight="normal" text-anchor="end">-2</text>
<text x="290.9" y="775.7" font-size="15" fill="#111" font-weight="normal" text-anchor="start">2</text>
<text x="207.5" y="798.3" font-size="15" fill="#111" font-weight="normal" text-anchor="end">-3</text>
<text x="299.7" y="798.3" font-size="15" fill="#111" font-weight="normal" text-anchor="start">3</text>
<text x="210.5" y="821.7" font-size="15" fill="#111" font-weight="normal" text-anchor="end">-4</text>
<text x="297.5" y="821.7" font-size="15" fill="#111" font-weight="normal" text-anchor="start">4</text>
<text x="222.9" y="841.7" font-size="15" fill="#111" font-weight="normal" text-anchor="end">-5</text>
<text x="284.5" y="841.7" font-size="15" fill="#111" font-weight="normal" text-anchor="start">5</text>
<circle cx="252.7" cy="777" r="3.9" fill="#ff0000"/>
<circle cx="802.3" cy="796.7" r="36" fill="#c0c0c0" stroke="#101010" stroke-width="1.2"/>
<path d="M774.85 780.85A31.7 31.7 0 0 1 801.19 765.02" fill="none" stroke="#ffffff" stroke-width="7"/>
<path d="M770.91 801.11A31.7 31.7 0 0 1 771.99 787.43" fill="none" stroke="#ffffff" stroke-width="7"/>
<path d="M829.18 779.9A31.7 31.7 0 0 1 790.42 826.09" fill="none" stroke="#858585" stroke-width="7"/>
<circle cx="802.6" cy="796.7" r="28" fill="#c0c0c0"/>
<path d="M782.8 816.5A28 28 0 0 1 820.6 775.25" fill="none" stroke="#ffffff" stroke-width="1.6"/>
<path d="M820.6 775.25A28 28 0 1 1 782.8 816.5" fill="none" stroke="#151515" stroke-width="1.6"/>
<line x1="775.08" y1="823.92" x2="773.31" y2="825.69" stroke="#303030" stroke-width="1.3" stroke-linecap="butt"/>
<line x1="765.68" y1="808.6" x2="763.31" y2="809.37" stroke="#303030" stroke-width="1.3" stroke-linecap="butt"/>
<line x1="764.27" y1="790.68" x2="761.8" y2="790.29" stroke="#303030" stroke-width="1.3" stroke-linecap="butt"/>
<line x1="771.15" y1="774.07" x2="769.13" y2="772.6" stroke="#303030" stroke-width="1.3" stroke-linecap="butt"/>
<line x1="784.82" y1="762.4" x2="783.69" y2="760.17" stroke="#303030" stroke-width="1.3" stroke-linecap="butt"/>
<line x1="802.3" y1="758.2" x2="802.3" y2="755.7" stroke="#303030" stroke-width="1.3" stroke-linecap="butt"/>
<line x1="819.78" y1="762.4" x2="820.91" y2="760.17" stroke="#303030" stroke-width="1.3" stroke-linecap="butt"/>
<line x1="833.45" y1="774.07" x2="835.47" y2="772.6" stroke="#303030" stroke-width="1.3" stroke-linecap="butt"/>
<line x1="840.33" y1="790.68" x2="842.8" y2="790.29" stroke="#303030" stroke-width="1.3" stroke-linecap="butt"/>
<line x1="838.92" y1="808.6" x2="841.29" y2="809.37" stroke="#303030" stroke-width="1.3" stroke-linecap="butt"/>
<line x1="829.52" y1="823.92" x2="831.29" y2="825.69" stroke="#303030" stroke-width="1.3" stroke-linecap="butt"/>
<text x="802.6" y="753.7" font-size="15" fill="#111" font-weight="normal" text-anchor="middle">0</text>
<text x="783.6" y="759.7" font-size="15" fill="#111" font-weight="normal" text-anchor="end">-1</text>
<text x="821.1" y="759.7" font-size="15" fill="#111" font-weight="normal" text-anchor="start">1</text>
<text x="766.3" y="774.7" font-size="15" fill="#111" font-weight="normal" text-anchor="end">-2</text>
<text x="840.5" y="774.7" font-size="15" fill="#111" font-weight="normal" text-anchor="start">2</text>
<text x="757.1" y="797.3" font-size="15" fill="#111" font-weight="normal" text-anchor="end">-3</text>
<text x="849.3" y="797.3" font-size="15" fill="#111" font-weight="normal" text-anchor="start">3</text>
<text x="760.1" y="820.7" font-size="15" fill="#111" font-weight="normal" text-anchor="end">-4</text>
<text x="847.1" y="820.7" font-size="15" fill="#111" font-weight="normal" text-anchor="start">4</text>
<text x="772.5" y="840.7" font-size="15" fill="#111" font-weight="normal" text-anchor="end">-5</text>
<text x="834.1" y="840.7" font-size="15" fill="#111" font-weight="normal" text-anchor="start">5</text>
<circle cx="802.3" cy="776" r="3.9" fill="#ff0000"/>
<circle cx="971.3" cy="796.7" r="36" fill="#c0c0c0" stroke="#101010" stroke-width="1.2"/>
<path d="M943.85 780.85A31.7 31.7 0 0 1 970.19 765.02" fill="none" stroke="#ffffff" stroke-width="7"/>
<path d="M939.91 801.11A31.7 31.7 0 0 1 940.99 787.43" fill="none" stroke="#ffffff" stroke-width="7"/>
<path d="M998.18 779.9A31.7 31.7 0 0 1 959.42 826.09" fill="none" stroke="#858585" stroke-width="7"/>
<circle cx="971.6" cy="796.7" r="28" fill="#c0c0c0"/>
<path d="M951.8 816.5A28 28 0 0 1 989.6 775.25" fill="none" stroke="#ffffff" stroke-width="1.6"/>
<path d="M989.6 775.25A28 28 0 1 1 951.8 816.5" fill="none" stroke="#151515" stroke-width="1.6"/>
<line x1="944.08" y1="823.92" x2="942.31" y2="825.69" stroke="#303030" stroke-width="1.3" stroke-linecap="butt"/>
<line x1="934.68" y1="808.6" x2="932.31" y2="809.37" stroke="#303030" stroke-width="1.3" stroke-linecap="butt"/>
<line x1="933.27" y1="790.68" x2="930.8" y2="790.29" stroke="#303030" stroke-width="1.3" stroke-linecap="butt"/>
<line x1="940.15" y1="774.07" x2="938.13" y2="772.6" stroke="#303030" stroke-width="1.3" stroke-linecap="butt"/>
<line x1="953.82" y1="762.4" x2="952.69" y2="760.17" stroke="#303030" stroke-width="1.3" stroke-linecap="butt"/>
<line x1="971.3" y1="758.2" x2="971.3" y2="755.7" stroke="#303030" stroke-width="1.3" stroke-linecap="butt"/>
<line x1="988.78" y1="762.4" x2="989.91" y2="760.17" stroke="#303030" stroke-width="1.3" stroke-linecap="butt"/>
<line x1="1002.45" y1="774.07" x2="1004.47" y2="772.6" stroke="#303030" stroke-width="1.3" stroke-linecap="butt"/>
<line x1="1009.33" y1="790.68" x2="1011.8" y2="790.29" stroke="#303030" stroke-width="1.3" stroke-linecap="butt"/>
<line x1="1007.92" y1="808.6" x2="1010.29" y2="809.37" stroke="#303030" stroke-width="1.3" stroke-linecap="butt"/>
<line x1="998.52" y1="823.92" x2="1000.29" y2="825.69" stroke="#303030" stroke-width="1.3" stroke-linecap="butt"/>
<text x="971.6" y="753.7" font-size="15" fill="#111" font-weight="normal" text-anchor="middle">0</text>
<text x="952.6" y="759.7" font-size="15" fill="#111" font-weight="normal" text-anchor="end">-1</text>
<text x="990.1" y="759.7" font-size="15" fill="#111" font-weight="normal" text-anchor="start">1</text>
<text x="935.3" y="774.7" font-size="15" fill="#111" font-weight="normal" text-anchor="end">-2</text>
<text x="1009.5" y="774.7" font-size="15" fill="#111" font-weight="normal" text-anchor="start">2</text>
<text x="926.1" y="797.3" font-size="15" fill="#111" font-weight="normal" text-anchor="end">-3</text>
<text x="1018.3" y="797.3" font-size="15" fill="#111" font-weight="normal" text-anchor="start">3</text>
<text x="929.1" y="820.7" font-size="15" fill="#111" font-weight="normal" text-anchor="end">-4</text>
<text x="1016.1" y="820.7" font-size="15" fill="#111" font-weight="normal" text-anchor="start">4</text>
<text x="941.5" y="840.7" font-size="15" fill="#111" font-weight="normal" text-anchor="end">-5</text>
<text x="1003.1" y="840.7" font-size="15" fill="#111" font-weight="normal" text-anchor="start">5</text>
<circle cx="971.3" cy="776" r="3.9" fill="#ff0000"/>
<rect x="1203" y="96" width="226" height="226" fill="#727272"/>
<rect x="1211.5" y="104.5" width="209" height="209" fill="#ffffe1"/>
<line x1="1253.28" y1="268.72" x2="1259.65" y2="262.35" stroke="#888888" stroke-width="4.6" stroke-linecap="round"/>
<line x1="1248.15" y1="262.34" x2="1253.54" y2="257.88" stroke="#8e8e8e" stroke-width="2.2" stroke-linecap="round"/>
<line x1="1243.26" y1="255.82" x2="1249.05" y2="251.89" stroke="#8e8e8e" stroke-width="2.2" stroke-linecap="round"/>
<line x1="1239" y1="248.87" x2="1245.13" y2="245.5" stroke="#8e8e8e" stroke-width="2.2" stroke-linecap="round"/>
<line x1="1235.41" y1="241.55" x2="1241.84" y2="238.77" stroke="#8e8e8e" stroke-width="2.2" stroke-linecap="round"/>
<line x1="1232.06" y1="234.08" x2="1240.62" y2="231.3" stroke="#888888" stroke-width="4.6" stroke-linecap="round"/>
<line x1="1230.38" y1="226.07" x2="1237.21" y2="224.54" stroke="#8e8e8e" stroke-width="2.2" stroke-linecap="round"/>
<line x1="1228.98" y1="218.04" x2="1235.93" y2="217.16" stroke="#8e8e8e" stroke-width="2.2" stroke-linecap="round"/>
<line x1="1228.34" y1="209.92" x2="1235.34" y2="209.7" stroke="#8e8e8e" stroke-width="2.2" stroke-linecap="round"/>
<line x1="1228.47" y1="201.77" x2="1235.46" y2="202.21" stroke="#8e8e8e" stroke-width="2.2" stroke-linecap="round"/>
<line x1="1228.87" y1="193.59" x2="1237.76" y2="195" stroke="#888888" stroke-width="4.6" stroke-linecap="round"/>
<line x1="1231.02" y1="185.69" x2="1237.8" y2="187.43" stroke="#8e8e8e" stroke-width="2.2" stroke-linecap="round"/>
<line x1="1233.41" y1="177.9" x2="1240" y2="180.27" stroke="#8e8e8e" stroke-width="2.2" stroke-linecap="round"/>
<line x1="1236.53" y1="170.37" x2="1242.87" y2="173.35" stroke="#8e8e8e" stroke-width="2.2" stroke-linecap="round"/>
<line x1="1240.35" y1="163.17" x2="1246.37" y2="166.73" stroke="#8e8e8e" stroke-width="2.2" stroke-linecap="round"/>
<line x1="1244.42" y1="156.06" x2="1251.7" y2="161.35" stroke="#888888" stroke-width="4.6" stroke-linecap="round"/>
<line x1="1249.92" y1="150" x2="1255.17" y2="154.63" stroke="#8e8e8e" stroke-width="2.2" stroke-linecap="round"/>
<line x1="1255.59" y1="144.14" x2="1260.38" y2="149.25" stroke="#8e8e8e" stroke-width="2.2" stroke-linecap="round"/>
<line x1="1261.78" y1="138.85" x2="1266.07" y2="144.38" stroke="#8e8e8e" stroke-width="2.2" stroke-linecap="round"/>
<line x1="1268.45" y1="134.17" x2="1272.2" y2="140.08" stroke="#8e8e8e" stroke-width="2.2" stroke-linecap="round"/>
<line x1="1275.3" y1="129.68" x2="1279.39" y2="137.7" stroke="#888888" stroke-width="4.6" stroke-linecap="round"/>
<line x1="1282.96" y1="126.77" x2="1285.53" y2="133.28" stroke="#8e8e8e" stroke-width="2.2" stroke-linecap="round"/>
<line x1="1290.67" y1="124.13" x2="1292.62" y2="130.86" stroke="#8e8e8e" stroke-width="2.2" stroke-linecap="round"/>
<line x1="1298.59" y1="122.23" x2="1299.9" y2="129.11" stroke="#8e8e8e" stroke-width="2.2" stroke-linecap="round"/>
<line x1="1306.66" y1="121.08" x2="1307.32" y2="128.05" stroke="#8e8e8e" stroke-width="2.2" stroke-linecap="round"/>
<line x1="1314.8" y1="120.2" x2="1314.8" y2="129.2" stroke="#888888" stroke-width="4.6" stroke-linecap="round"/>
<line x1="1322.94" y1="121.08" x2="1322.28" y2="128.05" stroke="#8e8e8e" stroke-width="2.2" stroke-linecap="round"/>
<line x1="1331.01" y1="122.23" x2="1329.7" y2="129.11" stroke="#8e8e8e" stroke-width="2.2" stroke-linecap="round"/>
<line x1="1338.93" y1="124.13" x2="1336.98" y2="130.86" stroke="#8e8e8e" stroke-width="2.2" stroke-linecap="round"/>
<line x1="1346.64" y1="126.77" x2="1344.07" y2="133.28" stroke="#8e8e8e" stroke-width="2.2" stroke-linecap="round"/>
<line x1="1354.3" y1="129.68" x2="1350.21" y2="137.7" stroke="#888888" stroke-width="4.6" stroke-linecap="round"/>
<line x1="1361.15" y1="134.17" x2="1357.4" y2="140.08" stroke="#8e8e8e" stroke-width="2.2" stroke-linecap="round"/>
<line x1="1367.82" y1="138.85" x2="1363.53" y2="144.38" stroke="#8e8e8e" stroke-width="2.2" stroke-linecap="round"/>
<line x1="1374.01" y1="144.14" x2="1369.22" y2="149.25" stroke="#8e8e8e" stroke-width="2.2" stroke-linecap="round"/>
<line x1="1379.68" y1="150" x2="1374.43" y2="154.63" stroke="#8e8e8e" stroke-width="2.2" stroke-linecap="round"/>
<line x1="1385.18" y1="156.06" x2="1377.9" y2="161.35" stroke="#888888" stroke-width="4.6" stroke-linecap="round"/>
<line x1="1389.25" y1="163.17" x2="1383.23" y2="166.73" stroke="#8e8e8e" stroke-width="2.2" stroke-linecap="round"/>
<line x1="1393.07" y1="170.37" x2="1386.73" y2="173.35" stroke="#8e8e8e" stroke-width="2.2" stroke-linecap="round"/>
<line x1="1396.19" y1="177.9" x2="1389.6" y2="180.27" stroke="#8e8e8e" stroke-width="2.2" stroke-linecap="round"/>
<line x1="1398.58" y1="185.69" x2="1391.8" y2="187.43" stroke="#8e8e8e" stroke-width="2.2" stroke-linecap="round"/>
<line x1="1400.73" y1="193.59" x2="1391.84" y2="195" stroke="#888888" stroke-width="4.6" stroke-linecap="round"/>
<line x1="1401.13" y1="201.77" x2="1394.14" y2="202.21" stroke="#8e8e8e" stroke-width="2.2" stroke-linecap="round"/>
<line x1="1401.26" y1="209.92" x2="1394.26" y2="209.7" stroke="#8e8e8e" stroke-width="2.2" stroke-linecap="round"/>
<line x1="1400.62" y1="218.04" x2="1393.67" y2="217.16" stroke="#8e8e8e" stroke-width="2.2" stroke-linecap="round"/>
<line x1="1399.22" y1="226.07" x2="1392.39" y2="224.54" stroke="#8e8e8e" stroke-width="2.2" stroke-linecap="round"/>
<line x1="1397.54" y1="234.08" x2="1388.98" y2="231.3" stroke="#888888" stroke-width="4.6" stroke-linecap="round"/>
<line x1="1394.19" y1="241.55" x2="1387.76" y2="238.77" stroke="#8e8e8e" stroke-width="2.2" stroke-linecap="round"/>
<line x1="1390.6" y1="248.87" x2="1384.47" y2="245.5" stroke="#8e8e8e" stroke-width="2.2" stroke-linecap="round"/>
<line x1="1386.34" y1="255.82" x2="1380.55" y2="251.89" stroke="#8e8e8e" stroke-width="2.2" stroke-linecap="round"/>
<line x1="1381.45" y1="262.34" x2="1376.06" y2="257.88" stroke="#8e8e8e" stroke-width="2.2" stroke-linecap="round"/>
<line x1="1376.32" y1="268.72" x2="1369.95" y2="262.35" stroke="#888888" stroke-width="4.6" stroke-linecap="round"/>
<text x="1292.7" y="153.9" font-size="14" fill="#111" font-weight="bold" text-anchor="middle">-20</text>
<text x="1336.9" y="153.9" font-size="14" fill="#111" font-weight="bold" text-anchor="middle">20</text>
<text x="1269" y="174.9" font-size="14" fill="#111" font-weight="bold" text-anchor="middle">-40</text>
<text x="1361.3" y="174.9" font-size="14" fill="#111" font-weight="bold" text-anchor="middle">40</text>
<text x="1256.1" y="204.8" font-size="14" fill="#111" font-weight="bold" text-anchor="middle">-60</text>
<text x="1374.2" y="204.8" font-size="14" fill="#111" font-weight="bold" text-anchor="middle">60</text>
<text x="1258.1" y="237" font-size="14" fill="#111" font-weight="bold" text-anchor="middle">-80</text>
<text x="1371.8" y="237" font-size="14" fill="#111" font-weight="bold" text-anchor="middle">80</text>
<text x="1280.2" y="264.1" font-size="14" fill="#111" font-weight="bold" text-anchor="middle">-100</text>
<text x="1350.4" y="264.1" font-size="14" fill="#111" font-weight="bold" text-anchor="middle">100</text>
<text x="1316.5" y="298" font-size="14" fill="#111" font-weight="bold" text-anchor="middle">RPM</text>
<path d="M1309.2 230.5L1312.6 141.2L1317.4 141.2L1319.4 230.5Z" fill="#000080"/>
<ellipse cx="1315" cy="140.2" rx="3.1" ry="5" fill="#000080"/>
<circle cx="1314.8" cy="207.7" r="6.6" fill="#c9c9c9" stroke="#8a8a8a" stroke-width="1.2"/>
<circle cx="1313.8" cy="206.7" r="3" fill="#e9e9e9"/>
<rect x="1102" y="336.2" width="136" height="136" rx="7" fill="#808080"/>
<rect x="1105" y="339.2" width="133" height="133" rx="6" fill="#ffffff"/>
<rect x="1105" y="339.2" width="131" height="131" rx="5" fill="#ffffe1"/>
<path d="M1113.21 451.28A103.87 103.87 0 0 1 1188.41 351.44L1191.24 361.28A93.63 93.63 0 0 0 1123.45 451.28Z" fill="#c2c2c2"/>
<path d="M1207.3 347.87A103.87 103.87 0 0 1 1217.08 347.41L1217.08 357.65A93.63 93.63 0 0 0 1208.27 358.06Z" fill="#c2c2c2"/>
<line x1="1113.51" y1="451.28" x2="1127.11" y2="451.28" stroke="#8c8c8c" stroke-width="1.8" stroke-linecap="butt"/>
<line x1="1114.78" y1="435.08" x2="1123.05" y2="436.38" stroke="#9c9c96" stroke-width="1.15" stroke-linecap="butt"/>
<line x1="1118.58" y1="419.27" x2="1126.54" y2="421.86" stroke="#9c9c96" stroke-width="1.15" stroke-linecap="butt"/>
<line x1="1124.8" y1="404.26" x2="1132.25" y2="408.06" stroke="#9c9c96" stroke-width="1.15" stroke-linecap="butt"/>
<line x1="1133.29" y1="390.4" x2="1140.06" y2="395.32" stroke="#9c9c96" stroke-width="1.15" stroke-linecap="butt"/>
<line x1="1143.63" y1="377.83" x2="1153.68" y2="387.88" stroke="#787878" stroke-width="2.7" stroke-linecap="butt"/>
<line x1="1156.2" y1="367.49" x2="1161.12" y2="374.26" stroke="#9c9c96" stroke-width="1.15" stroke-linecap="butt"/>
<line x1="1170.06" y1="359" x2="1173.86" y2="366.45" stroke="#9c9c96" stroke-width="1.15" stroke-linecap="butt"/>
<line x1="1185.07" y1="352.78" x2="1187.66" y2="360.74" stroke="#9c9c96" stroke-width="1.15" stroke-linecap="butt"/>
<line x1="1200.88" y1="348.98" x2="1202.18" y2="357.25" stroke="#9c9c96" stroke-width="1.15" stroke-linecap="butt"/>
<line x1="1217.08" y1="347.71" x2="1217.08" y2="361.31" stroke="#8c8c8c" stroke-width="1.8" stroke-linecap="butt"/>
<text x="1133.7" y="450.1" font-size="16.1" fill="#111" font-weight="normal" text-anchor="start" textLength="7.54" lengthAdjust="spacingAndGlyphs">0</text>
<text x="1157.3" y="401.6" font-size="16.1" fill="#111" font-weight="normal" text-anchor="start" textLength="24.83" lengthAdjust="spacingAndGlyphs">500</text>
<text x="1200.7" y="377.8" font-size="16.1" fill="#111" font-weight="normal" text-anchor="start" textLength="33.48" lengthAdjust="spacingAndGlyphs">1000</text>
<text x="1186.7" y="432.97" font-size="16.5" fill="#111" font-weight="normal" text-anchor="start">psi</text>
<line x1="1217.08" y1="451.28" x2="1202.99" y2="353.42" stroke="#000080" stroke-width="2.3" stroke-linecap="butt"/>
<circle cx="1217.08" cy="451.28" r="9" fill="#a9a9a9" stroke="#3a3a3a" stroke-width="1.2"/>
<path d="M1217.08 451.28L1224.8 453.35A8 8 0 0 1 1221.08 458.2Z" fill="#6e6e6e"/>
<ellipse cx="1213.3" cy="447.5" rx="2.88" ry="1.8" fill="#f4f4f4" transform="rotate(45 1213.3 447.5)"/>
<rect x="1252" y="336.2" width="136" height="136" rx="7" fill="#808080"/>
<rect x="1255" y="339.2" width="133" height="133" rx="6" fill="#ffffff"/>
<rect x="1255" y="339.2" width="131" height="131" rx="5" fill="#ffffe1"/>
<path d="M1263.21 451.28A103.87 103.87 0 0 1 1338.41 351.44L1341.24 361.28A93.63 93.63 0 0 0 1273.45 451.28Z" fill="#c2c2c2"/>
<path d="M1357.3 347.87A103.87 103.87 0 0 1 1367.08 347.41L1367.08 357.65A93.63 93.63 0 0 0 1358.27 358.06Z" fill="#c2c2c2"/>
<line x1="1263.51" y1="451.28" x2="1277.11" y2="451.28" stroke="#8c8c8c" stroke-width="1.8" stroke-linecap="butt"/>
<line x1="1264.78" y1="435.08" x2="1273.05" y2="436.38" stroke="#9c9c96" stroke-width="1.15" stroke-linecap="butt"/>
<line x1="1268.58" y1="419.27" x2="1276.54" y2="421.86" stroke="#9c9c96" stroke-width="1.15" stroke-linecap="butt"/>
<line x1="1274.8" y1="404.26" x2="1282.25" y2="408.06" stroke="#9c9c96" stroke-width="1.15" stroke-linecap="butt"/>
<line x1="1283.29" y1="390.4" x2="1290.06" y2="395.32" stroke="#9c9c96" stroke-width="1.15" stroke-linecap="butt"/>
<line x1="1293.63" y1="377.83" x2="1303.68" y2="387.88" stroke="#787878" stroke-width="2.7" stroke-linecap="butt"/>
<line x1="1306.2" y1="367.49" x2="1311.12" y2="374.26" stroke="#9c9c96" stroke-width="1.15" stroke-linecap="butt"/>
<line x1="1320.06" y1="359" x2="1323.86" y2="366.45" stroke="#9c9c96" stroke-width="1.15" stroke-linecap="butt"/>
<line x1="1335.07" y1="352.78" x2="1337.66" y2="360.74" stroke="#9c9c96" stroke-width="1.15" stroke-linecap="butt"/>
<line x1="1350.88" y1="348.98" x2="1352.18" y2="357.25" stroke="#9c9c96" stroke-width="1.15" stroke-linecap="butt"/>
<line x1="1367.08" y1="347.71" x2="1367.08" y2="361.31" stroke="#8c8c8c" stroke-width="1.8" stroke-linecap="butt"/>
<text x="1283.7" y="450.1" font-size="16.1" fill="#111" font-weight="normal" text-anchor="start" textLength="7.54" lengthAdjust="spacingAndGlyphs">0</text>
<text x="1307.3" y="401.6" font-size="16.1" fill="#111" font-weight="normal" text-anchor="start" textLength="24.83" lengthAdjust="spacingAndGlyphs">500</text>
<text x="1350.7" y="377.8" font-size="16.1" fill="#111" font-weight="normal" text-anchor="start" textLength="33.48" lengthAdjust="spacingAndGlyphs">1000</text>
<text x="1336.7" y="432.97" font-size="16.5" fill="#111" font-weight="normal" text-anchor="start">psi</text>
<line x1="1367.08" y1="451.28" x2="1352.99" y2="353.42" stroke="#000080" stroke-width="2.3" stroke-linecap="butt"/>
<circle cx="1367.08" cy="451.28" r="9" fill="#a9a9a9" stroke="#3a3a3a" stroke-width="1.2"/>
<path d="M1367.08 451.28L1374.8 453.35A8 8 0 0 1 1371.08 458.2Z" fill="#6e6e6e"/>
<ellipse cx="1363.3" cy="447.5" rx="2.88" ry="1.8" fill="#f4f4f4" transform="rotate(45 1363.3 447.5)"/>
<rect x="1402" y="336.2" width="136" height="136" rx="7" fill="#808080"/>
<rect x="1405" y="339.2" width="133" height="133" rx="6" fill="#ffffff"/>
<rect x="1405" y="339.2" width="131" height="131" rx="5" fill="#ffffe1"/>
<line x1="1413.51" y1="451.28" x2="1427.11" y2="451.28" stroke="#8c8c8c" stroke-width="1.8" stroke-linecap="butt"/>
<line x1="1414.78" y1="435.08" x2="1423.05" y2="436.38" stroke="#9c9c96" stroke-width="1.15" stroke-linecap="butt"/>
<line x1="1418.58" y1="419.27" x2="1426.54" y2="421.86" stroke="#9c9c96" stroke-width="1.15" stroke-linecap="butt"/>
<line x1="1424.8" y1="404.26" x2="1432.25" y2="408.06" stroke="#9c9c96" stroke-width="1.15" stroke-linecap="butt"/>
<line x1="1433.29" y1="390.4" x2="1440.06" y2="395.32" stroke="#9c9c96" stroke-width="1.15" stroke-linecap="butt"/>
<line x1="1443.63" y1="377.83" x2="1453.68" y2="387.88" stroke="#787878" stroke-width="2.7" stroke-linecap="butt"/>
<line x1="1456.2" y1="367.49" x2="1461.12" y2="374.26" stroke="#9c9c96" stroke-width="1.15" stroke-linecap="butt"/>
<line x1="1470.06" y1="359" x2="1473.86" y2="366.45" stroke="#9c9c96" stroke-width="1.15" stroke-linecap="butt"/>
<line x1="1485.07" y1="352.78" x2="1487.66" y2="360.74" stroke="#9c9c96" stroke-width="1.15" stroke-linecap="butt"/>
<line x1="1500.88" y1="348.98" x2="1502.18" y2="357.25" stroke="#9c9c96" stroke-width="1.15" stroke-linecap="butt"/>
<line x1="1517.08" y1="347.71" x2="1517.08" y2="361.31" stroke="#8c8c8c" stroke-width="1.8" stroke-linecap="butt"/>
<text x="1433.7" y="450.1" font-size="16.1" fill="#111" font-weight="normal" text-anchor="start" textLength="7.54" lengthAdjust="spacingAndGlyphs">0</text>
<text x="1457.3" y="401.6" font-size="16.1" fill="#111" font-weight="normal" text-anchor="start" textLength="24.83" lengthAdjust="spacingAndGlyphs">500</text>
<text x="1500.7" y="377.8" font-size="16.1" fill="#111" font-weight="normal" text-anchor="start" textLength="33.48" lengthAdjust="spacingAndGlyphs">1000</text>
<text x="1486.7" y="432.97" font-size="16.5" fill="#111" font-weight="normal" text-anchor="start">psi</text>
<line x1="1517.08" y1="451.28" x2="1418.22" y2="451.28" stroke="#000080" stroke-width="2.3" stroke-linecap="butt"/>
<circle cx="1517.08" cy="451.28" r="9" fill="#a9a9a9" stroke="#3a3a3a" stroke-width="1.2"/>
<path d="M1517.08 451.28L1524.8 453.35A8 8 0 0 1 1521.08 458.2Z" fill="#6e6e6e"/>
<ellipse cx="1513.3" cy="447.5" rx="2.88" ry="1.8" fill="#f4f4f4" transform="rotate(45 1513.3 447.5)"/>
<rect x="1102" y="501.3" width="136" height="136" rx="7" fill="#808080"/>
<rect x="1105" y="504.3" width="133" height="133" rx="6" fill="#ffffff"/>
<rect x="1105" y="504.3" width="131" height="131" rx="5" fill="#ffffe1"/>
<path d="M1113.21 616.38A103.87 103.87 0 0 1 1123.8 570.68L1132.99 575.19A93.63 93.63 0 0 0 1123.45 616.38Z" fill="#ff0000"/>
<line x1="1113.51" y1="616.38" x2="1127.11" y2="616.38" stroke="#8c8c8c" stroke-width="1.8" stroke-linecap="butt"/>
<line x1="1113.71" y1="609.87" x2="1122.06" y2="610.4" stroke="#9c9c96" stroke-width="1.15" stroke-linecap="butt"/>
<line x1="1114.32" y1="603.4" x2="1122.63" y2="604.45" stroke="#9c9c96" stroke-width="1.15" stroke-linecap="butt"/>
<line x1="1115.34" y1="596.97" x2="1123.56" y2="598.54" stroke="#9c9c96" stroke-width="1.15" stroke-linecap="butt"/>
<line x1="1116.76" y1="590.62" x2="1124.87" y2="592.7" stroke="#9c9c96" stroke-width="1.15" stroke-linecap="butt"/>
<line x1="1118.29" y1="584.28" x2="1131.81" y2="588.67" stroke="#787878" stroke-width="2.7" stroke-linecap="butt"/>
<line x1="1120.78" y1="578.25" x2="1128.56" y2="581.33" stroke="#9c9c96" stroke-width="1.15" stroke-linecap="butt"/>
<line x1="1123.36" y1="572.28" x2="1130.94" y2="575.84" stroke="#9c9c96" stroke-width="1.15" stroke-linecap="butt"/>
<line x1="1126.32" y1="566.48" x2="1133.65" y2="570.51" stroke="#9c9c96" stroke-width="1.15" stroke-linecap="butt"/>
<line x1="1129.63" y1="560.88" x2="1136.7" y2="565.37" stroke="#9c9c96" stroke-width="1.15" stroke-linecap="butt"/>
<line x1="1133.04" y1="555.32" x2="1144.54" y2="563.68" stroke="#787878" stroke-width="2.7" stroke-linecap="butt"/>
<line x1="1137.28" y1="550.36" x2="1143.72" y2="555.69" stroke="#9c9c96" stroke-width="1.15" stroke-linecap="butt"/>
<line x1="1141.58" y1="545.48" x2="1147.68" y2="551.21" stroke="#9c9c96" stroke-width="1.15" stroke-linecap="butt"/>
<line x1="1146.18" y1="540.88" x2="1151.91" y2="546.98" stroke="#9c9c96" stroke-width="1.15" stroke-linecap="butt"/>
<line x1="1151.06" y1="536.58" x2="1156.39" y2="543.02" stroke="#9c9c96" stroke-width="1.15" stroke-linecap="butt"/>
<line x1="1156.02" y1="532.34" x2="1164.38" y2="543.84" stroke="#787878" stroke-width="2.7" stroke-linecap="butt"/>
<line x1="1161.58" y1="528.93" x2="1166.07" y2="536" stroke="#9c9c96" stroke-width="1.15" stroke-linecap="butt"/>
<line x1="1167.18" y1="525.62" x2="1171.21" y2="532.95" stroke="#9c9c96" stroke-width="1.15" stroke-linecap="butt"/>
<line x1="1172.98" y1="522.66" x2="1176.54" y2="530.24" stroke="#9c9c96" stroke-width="1.15" stroke-linecap="butt"/>
<line x1="1178.95" y1="520.08" x2="1182.03" y2="527.86" stroke="#9c9c96" stroke-width="1.15" stroke-linecap="butt"/>
<line x1="1184.98" y1="517.59" x2="1189.37" y2="531.11" stroke="#787878" stroke-width="2.7" stroke-linecap="butt"/>
<line x1="1191.32" y1="516.06" x2="1193.4" y2="524.17" stroke="#9c9c96" stroke-width="1.15" stroke-linecap="butt"/>
<line x1="1197.67" y1="514.64" x2="1199.24" y2="522.86" stroke="#9c9c96" stroke-width="1.15" stroke-linecap="butt"/>
<line x1="1204.1" y1="513.62" x2="1205.15" y2="521.93" stroke="#9c9c96" stroke-width="1.15" stroke-linecap="butt"/>
<line x1="1210.57" y1="513.01" x2="1211.1" y2="521.36" stroke="#9c9c96" stroke-width="1.15" stroke-linecap="butt"/>
<line x1="1217.08" y1="512.81" x2="1217.08" y2="526.41" stroke="#8c8c8c" stroke-width="1.8" stroke-linecap="butt"/>
<text x="1133.7" y="613.9" font-size="16.1" fill="#111" font-weight="normal" text-anchor="start" textLength="7.54" lengthAdjust="spacingAndGlyphs">0</text>
<text x="1138.6" y="599.2" font-size="16.1" fill="#111" font-weight="normal" text-anchor="start" textLength="16.19" lengthAdjust="spacingAndGlyphs">10</text>
<text x="1149.2" y="575.8" font-size="16.1" fill="#111" font-weight="normal" text-anchor="start" textLength="16.19" lengthAdjust="spacingAndGlyphs">20</text>
<text x="1167.7" y="556.7" font-size="16.1" fill="#111" font-weight="normal" text-anchor="start" textLength="16.19" lengthAdjust="spacingAndGlyphs">30</text>
<text x="1190.6" y="545.8" font-size="16.1" fill="#111" font-weight="normal" text-anchor="start" textLength="16.19" lengthAdjust="spacingAndGlyphs">40</text>
<text x="1209.2" y="542" font-size="16.1" fill="#111" font-weight="normal" text-anchor="start" textLength="16.19" lengthAdjust="spacingAndGlyphs">50</text>
<text x="1186.7" y="598.07" font-size="16.5" fill="#111" font-weight="normal" text-anchor="start">psi</text>
<line x1="1217.08" y1="616.38" x2="1118.22" y2="616.38" stroke="#000080" stroke-width="2.3" stroke-linecap="butt"/>
<circle cx="1217.08" cy="616.38" r="9" fill="#a9a9a9" stroke="#3a3a3a" stroke-width="1.2"/>
<path d="M1217.08 616.38L1224.8 618.45A8 8 0 0 1 1221.08 623.3Z" fill="#6e6e6e"/>
<ellipse cx="1213.3" cy="612.6" rx="2.88" ry="1.8" fill="#f4f4f4" transform="rotate(45 1213.3 612.6)"/>
<rect x="1252" y="501.3" width="136" height="136" rx="7" fill="#808080"/>
<rect x="1255" y="504.3" width="133" height="133" rx="6" fill="#ffffff"/>
<rect x="1255" y="504.3" width="131" height="131" rx="5" fill="#ffffe1"/>
<path d="M1263.21 616.38A103.87 103.87 0 0 1 1264.36 600.93L1274.49 602.46A93.63 93.63 0 0 0 1273.45 616.38Z" fill="#c2c2c2"/>
<line x1="1263.51" y1="616.38" x2="1277.11" y2="616.38" stroke="#8c8c8c" stroke-width="1.8" stroke-linecap="butt"/>
<line x1="1264.78" y1="600.18" x2="1273.05" y2="601.48" stroke="#9c9c96" stroke-width="1.15" stroke-linecap="butt"/>
<line x1="1268.58" y1="584.37" x2="1276.54" y2="586.96" stroke="#9c9c96" stroke-width="1.15" stroke-linecap="butt"/>
<line x1="1274.8" y1="569.36" x2="1282.25" y2="573.16" stroke="#9c9c96" stroke-width="1.15" stroke-linecap="butt"/>
<line x1="1283.29" y1="555.5" x2="1290.06" y2="560.42" stroke="#9c9c96" stroke-width="1.15" stroke-linecap="butt"/>
<line x1="1293.63" y1="542.93" x2="1303.68" y2="552.98" stroke="#787878" stroke-width="2.7" stroke-linecap="butt"/>
<line x1="1306.2" y1="532.59" x2="1311.12" y2="539.36" stroke="#9c9c96" stroke-width="1.15" stroke-linecap="butt"/>
<line x1="1320.06" y1="524.1" x2="1323.86" y2="531.55" stroke="#9c9c96" stroke-width="1.15" stroke-linecap="butt"/>
<line x1="1335.07" y1="517.88" x2="1337.66" y2="525.84" stroke="#9c9c96" stroke-width="1.15" stroke-linecap="butt"/>
<line x1="1350.88" y1="514.08" x2="1352.18" y2="522.35" stroke="#9c9c96" stroke-width="1.15" stroke-linecap="butt"/>
<line x1="1367.08" y1="512.81" x2="1367.08" y2="526.41" stroke="#8c8c8c" stroke-width="1.8" stroke-linecap="butt"/>
<text x="1283.5" y="613.9" font-size="16.1" fill="#111" font-weight="normal" text-anchor="start" textLength="7.54" lengthAdjust="spacingAndGlyphs">0</text>
<text x="1307.2" y="564.9" font-size="16.1" fill="#111" font-weight="normal" text-anchor="start" textLength="24.83" lengthAdjust="spacingAndGlyphs">200</text>
<text x="1354.6" y="542" font-size="16.1" fill="#111" font-weight="normal" text-anchor="start" textLength="24.83" lengthAdjust="spacingAndGlyphs">400</text>
<text x="1336.7" y="598.07" font-size="16.5" fill="#111" font-weight="normal" text-anchor="start">psi</text>
<line x1="1367.08" y1="616.38" x2="1330.32" y2="524.6" stroke="#000080" stroke-width="2.3" stroke-linecap="butt"/>
<circle cx="1367.08" cy="616.38" r="9" fill="#a9a9a9" stroke="#3a3a3a" stroke-width="1.2"/>
<path d="M1367.08 616.38L1374.8 618.45A8 8 0 0 1 1371.08 623.3Z" fill="#6e6e6e"/>
<ellipse cx="1363.3" cy="612.6" rx="2.88" ry="1.8" fill="#f4f4f4" transform="rotate(45 1363.3 612.6)"/>
<rect x="1402" y="501.3" width="136" height="136" rx="7" fill="#808080"/>
<rect x="1405" y="504.3" width="133" height="133" rx="6" fill="#ffffff"/>
<rect x="1405" y="504.3" width="131" height="131" rx="5" fill="#ffffe1"/>
<path d="M1413.21 616.38A103.87 103.87 0 0 1 1472.7 522.46L1477.08 531.72A93.63 93.63 0 0 0 1423.45 616.38Z" fill="#ff0000"/>
<line x1="1413.51" y1="616.38" x2="1427.11" y2="616.38" stroke="#8c8c8c" stroke-width="1.8" stroke-linecap="butt"/>
<line x1="1414.78" y1="600.18" x2="1423.05" y2="601.48" stroke="#9c9c96" stroke-width="1.15" stroke-linecap="butt"/>
<line x1="1418.58" y1="584.37" x2="1426.54" y2="586.96" stroke="#9c9c96" stroke-width="1.15" stroke-linecap="butt"/>
<line x1="1424.8" y1="569.36" x2="1432.25" y2="573.16" stroke="#9c9c96" stroke-width="1.15" stroke-linecap="butt"/>
<line x1="1433.29" y1="555.5" x2="1440.06" y2="560.42" stroke="#9c9c96" stroke-width="1.15" stroke-linecap="butt"/>
<line x1="1443.63" y1="542.93" x2="1453.68" y2="552.98" stroke="#787878" stroke-width="2.7" stroke-linecap="butt"/>
<line x1="1456.2" y1="532.59" x2="1461.12" y2="539.36" stroke="#9c9c96" stroke-width="1.15" stroke-linecap="butt"/>
<line x1="1470.06" y1="524.1" x2="1473.86" y2="531.55" stroke="#9c9c96" stroke-width="1.15" stroke-linecap="butt"/>
<line x1="1485.07" y1="517.88" x2="1487.66" y2="525.84" stroke="#9c9c96" stroke-width="1.15" stroke-linecap="butt"/>
<line x1="1500.88" y1="514.08" x2="1502.18" y2="522.35" stroke="#9c9c96" stroke-width="1.15" stroke-linecap="butt"/>
<line x1="1517.08" y1="512.81" x2="1517.08" y2="526.41" stroke="#8c8c8c" stroke-width="1.8" stroke-linecap="butt"/>
<text x="1433.7" y="615.2" font-size="16.1" fill="#111" font-weight="normal" text-anchor="start" textLength="7.54" lengthAdjust="spacingAndGlyphs">0</text>
<text x="1457.3" y="566.7" font-size="16.1" fill="#111" font-weight="normal" text-anchor="start" textLength="24.83" lengthAdjust="spacingAndGlyphs">500</text>
<text x="1500.7" y="542.9" font-size="16.1" fill="#111" font-weight="normal" text-anchor="start" textLength="33.48" lengthAdjust="spacingAndGlyphs">1000</text>
<text x="1486.7" y="598.07" font-size="16.5" fill="#111" font-weight="normal" text-anchor="start">psi</text>
<line x1="1517.08" y1="616.38" x2="1418.22" y2="616.38" stroke="#000080" stroke-width="2.3" stroke-linecap="butt"/>
<circle cx="1517.08" cy="616.38" r="9" fill="#a9a9a9" stroke="#3a3a3a" stroke-width="1.2"/>
<path d="M1517.08 616.38L1524.8 618.45A8 8 0 0 1 1521.08 623.3Z" fill="#6e6e6e"/>
<ellipse cx="1513.3" cy="612.6" rx="2.88" ry="1.8" fill="#f4f4f4" transform="rotate(45 1513.3 612.6)"/>
<rect x="1102" y="668.9" width="136" height="136" rx="7" fill="#808080"/>
<rect x="1105" y="671.9" width="133" height="133" rx="6" fill="#ffffff"/>
<rect x="1105" y="671.9" width="131" height="131" rx="5" fill="#ffffe1"/>
<path d="M1113.21 783.98A103.87 103.87 0 0 1 1115.05 764.51L1125.1 766.43A93.63 93.63 0 0 0 1123.45 783.98Z" fill="#ff0000"/>
<line x1="1113.51" y1="783.98" x2="1127.11" y2="783.98" stroke="#8c8c8c" stroke-width="1.8" stroke-linecap="butt"/>
<line x1="1113.83" y1="775.85" x2="1122.17" y2="776.51" stroke="#9c9c96" stroke-width="1.15" stroke-linecap="butt"/>
<line x1="1114.78" y1="767.78" x2="1123.05" y2="769.08" stroke="#9c9c96" stroke-width="1.15" stroke-linecap="butt"/>
<line x1="1116.37" y1="759.8" x2="1124.51" y2="761.75" stroke="#9c9c96" stroke-width="1.15" stroke-linecap="butt"/>
<line x1="1118.58" y1="751.97" x2="1126.54" y2="754.56" stroke="#9c9c96" stroke-width="1.15" stroke-linecap="butt"/>
<line x1="1121.11" y1="744.23" x2="1134.25" y2="749.67" stroke="#787878" stroke-width="2.7" stroke-linecap="butt"/>
<line x1="1124.8" y1="736.96" x2="1132.25" y2="740.76" stroke="#9c9c96" stroke-width="1.15" stroke-linecap="butt"/>
<line x1="1128.77" y1="729.86" x2="1135.91" y2="734.24" stroke="#9c9c96" stroke-width="1.15" stroke-linecap="butt"/>
<line x1="1133.29" y1="723.1" x2="1140.06" y2="728.02" stroke="#9c9c96" stroke-width="1.15" stroke-linecap="butt"/>
<line x1="1138.32" y1="716.71" x2="1144.69" y2="722.15" stroke="#9c9c96" stroke-width="1.15" stroke-linecap="butt"/>
<line x1="1143.63" y1="710.53" x2="1153.68" y2="720.58" stroke="#787878" stroke-width="2.7" stroke-linecap="butt"/>
<line x1="1149.81" y1="705.22" x2="1155.25" y2="711.59" stroke="#9c9c96" stroke-width="1.15" stroke-linecap="butt"/>
<line x1="1156.2" y1="700.19" x2="1161.12" y2="706.96" stroke="#9c9c96" stroke-width="1.15" stroke-linecap="butt"/>
<line x1="1162.96" y1="695.67" x2="1167.34" y2="702.81" stroke="#9c9c96" stroke-width="1.15" stroke-linecap="butt"/>
<line x1="1170.06" y1="691.7" x2="1173.86" y2="699.15" stroke="#9c9c96" stroke-width="1.15" stroke-linecap="butt"/>
<line x1="1177.33" y1="688.01" x2="1182.77" y2="701.15" stroke="#787878" stroke-width="2.7" stroke-linecap="butt"/>
<line x1="1185.07" y1="685.48" x2="1187.66" y2="693.44" stroke="#9c9c96" stroke-width="1.15" stroke-linecap="butt"/>
<line x1="1192.9" y1="683.27" x2="1194.85" y2="691.41" stroke="#9c9c96" stroke-width="1.15" stroke-linecap="butt"/>
<line x1="1200.88" y1="681.68" x2="1202.18" y2="689.95" stroke="#9c9c96" stroke-width="1.15" stroke-linecap="butt"/>
<line x1="1208.95" y1="680.73" x2="1209.61" y2="689.07" stroke="#9c9c96" stroke-width="1.15" stroke-linecap="butt"/>
<line x1="1217.08" y1="680.41" x2="1217.08" y2="694.01" stroke="#8c8c8c" stroke-width="1.8" stroke-linecap="butt"/>
<text x="1133.6" y="781.5" font-size="16.1" fill="#111" font-weight="normal" text-anchor="start" textLength="7.54" lengthAdjust="spacingAndGlyphs">0</text>
<text x="1140" y="760.1" font-size="16.1" fill="#111" font-weight="normal" text-anchor="start" textLength="16.19" lengthAdjust="spacingAndGlyphs">50</text>
<text x="1158.2" y="732.5" font-size="16.1" fill="#111" font-weight="normal" text-anchor="start" textLength="24.83" lengthAdjust="spacingAndGlyphs">100</text>
<text x="1186.4" y="715.7" font-size="16.1" fill="#111" font-weight="normal" text-anchor="start" textLength="24.83" lengthAdjust="spacingAndGlyphs">150</text>
<rect x="1203.5" y="696.1" width="27.83" height="15" fill="#ffffe1"/>
<text x="1205" y="708.6" font-size="16.1" fill="#111" font-weight="normal" text-anchor="start" textLength="24.83" lengthAdjust="spacingAndGlyphs">200</text>
<text x="1186.7" y="765.67" font-size="16.5" fill="#111" font-weight="normal" text-anchor="start">psi</text>
<line x1="1217.08" y1="783.98" x2="1118.22" y2="783.98" stroke="#000080" stroke-width="2.3" stroke-linecap="butt"/>
<circle cx="1217.08" cy="783.98" r="9" fill="#a9a9a9" stroke="#3a3a3a" stroke-width="1.2"/>
<path d="M1217.08 783.98L1224.8 786.05A8 8 0 0 1 1221.08 790.9Z" fill="#6e6e6e"/>
<ellipse cx="1213.3" cy="780.2" rx="2.88" ry="1.8" fill="#f4f4f4" transform="rotate(45 1213.3 780.2)"/>
<rect x="1252" y="668.9" width="136" height="136" rx="7" fill="#808080"/>
<rect x="1255" y="671.9" width="133" height="133" rx="6" fill="#ffffff"/>
<rect x="1255" y="671.9" width="131" height="131" rx="5" fill="#ffffe1"/>
<path d="M1263.21 783.98A103.87 103.87 0 0 1 1287.04 717.77L1294.93 724.29A93.63 93.63 0 0 0 1273.45 783.98Z" fill="#c2c2c2"/>
<line x1="1263.51" y1="783.98" x2="1277.11" y2="783.98" stroke="#8c8c8c" stroke-width="1.8" stroke-linecap="butt"/>
<line x1="1264.78" y1="767.78" x2="1273.05" y2="769.08" stroke="#9c9c96" stroke-width="1.15" stroke-linecap="butt"/>
<line x1="1268.58" y1="751.97" x2="1276.54" y2="754.56" stroke="#9c9c96" stroke-width="1.15" stroke-linecap="butt"/>
<line x1="1274.8" y1="736.96" x2="1282.25" y2="740.76" stroke="#9c9c96" stroke-width="1.15" stroke-linecap="butt"/>
<line x1="1283.29" y1="723.1" x2="1290.06" y2="728.02" stroke="#9c9c96" stroke-width="1.15" stroke-linecap="butt"/>
<line x1="1293.63" y1="710.53" x2="1303.68" y2="720.58" stroke="#787878" stroke-width="2.7" stroke-linecap="butt"/>
<line x1="1306.2" y1="700.19" x2="1311.12" y2="706.96" stroke="#9c9c96" stroke-width="1.15" stroke-linecap="butt"/>
<line x1="1320.06" y1="691.7" x2="1323.86" y2="699.15" stroke="#9c9c96" stroke-width="1.15" stroke-linecap="butt"/>
<line x1="1335.07" y1="685.48" x2="1337.66" y2="693.44" stroke="#9c9c96" stroke-width="1.15" stroke-linecap="butt"/>
<line x1="1350.88" y1="681.68" x2="1352.18" y2="689.95" stroke="#9c9c96" stroke-width="1.15" stroke-linecap="butt"/>
<line x1="1367.08" y1="680.41" x2="1367.08" y2="694.01" stroke="#8c8c8c" stroke-width="1.8" stroke-linecap="butt"/>
<text x="1283.6" y="781.5" font-size="16.1" fill="#111" font-weight="normal" text-anchor="start" textLength="7.54" lengthAdjust="spacingAndGlyphs">0</text>
<text x="1307.2" y="732.5" font-size="16.1" fill="#111" font-weight="normal" text-anchor="start" textLength="7.54" lengthAdjust="spacingAndGlyphs">5</text>
<text x="1359.2" y="708.6" font-size="16.1" fill="#111" font-weight="normal" text-anchor="start" textLength="16.19" lengthAdjust="spacingAndGlyphs">10</text>
<text x="1336.7" y="765.67" font-size="16.5" fill="#111" font-weight="normal" text-anchor="start">psi</text>
<line x1="1367.08" y1="783.98" x2="1347.03" y2="687.17" stroke="#000080" stroke-width="2.3" stroke-linecap="butt"/>
<circle cx="1367.08" cy="783.98" r="9" fill="#a9a9a9" stroke="#3a3a3a" stroke-width="1.2"/>
<path d="M1367.08 783.98L1374.8 786.05A8 8 0 0 1 1371.08 790.9Z" fill="#6e6e6e"/>
<ellipse cx="1363.3" cy="780.2" rx="2.88" ry="1.8" fill="#f4f4f4" transform="rotate(45 1363.3 780.2)"/>
<rect x="1402" y="668.9" width="136" height="136" rx="7" fill="#808080"/>
<rect x="1405" y="671.9" width="133" height="133" rx="6" fill="#ffffff"/>
<rect x="1405" y="671.9" width="131" height="131" rx="5" fill="#ffffe1"/>
<path d="M1413.21 783.98A103.87 103.87 0 0 1 1422.41 741.23L1431.74 745.45A93.63 93.63 0 0 0 1423.45 783.98Z" fill="#ff0000"/>
<line x1="1413.51" y1="783.98" x2="1427.11" y2="783.98" stroke="#8c8c8c" stroke-width="1.8" stroke-linecap="butt"/>
<line x1="1414.78" y1="767.78" x2="1423.05" y2="769.08" stroke="#9c9c96" stroke-width="1.15" stroke-linecap="butt"/>
<line x1="1418.58" y1="751.97" x2="1426.54" y2="754.56" stroke="#9c9c96" stroke-width="1.15" stroke-linecap="butt"/>
<line x1="1424.8" y1="736.96" x2="1432.25" y2="740.76" stroke="#9c9c96" stroke-width="1.15" stroke-linecap="butt"/>
<line x1="1433.29" y1="723.1" x2="1440.06" y2="728.02" stroke="#9c9c96" stroke-width="1.15" stroke-linecap="butt"/>
<line x1="1443.63" y1="710.53" x2="1453.68" y2="720.58" stroke="#787878" stroke-width="2.7" stroke-linecap="butt"/>
<line x1="1456.2" y1="700.19" x2="1461.12" y2="706.96" stroke="#9c9c96" stroke-width="1.15" stroke-linecap="butt"/>
<line x1="1470.06" y1="691.7" x2="1473.86" y2="699.15" stroke="#9c9c96" stroke-width="1.15" stroke-linecap="butt"/>
<line x1="1485.07" y1="685.48" x2="1487.66" y2="693.44" stroke="#9c9c96" stroke-width="1.15" stroke-linecap="butt"/>
<line x1="1500.88" y1="681.68" x2="1502.18" y2="689.95" stroke="#9c9c96" stroke-width="1.15" stroke-linecap="butt"/>
<line x1="1517.08" y1="680.41" x2="1517.08" y2="694.01" stroke="#8c8c8c" stroke-width="1.8" stroke-linecap="butt"/>
<text x="1433.9" y="780.5" font-size="16.1" fill="#111" font-weight="normal" text-anchor="start" textLength="7.54" lengthAdjust="spacingAndGlyphs">0</text>
<text x="1457.2" y="732.5" font-size="16.1" fill="#111" font-weight="normal" text-anchor="start" textLength="16.19" lengthAdjust="spacingAndGlyphs">50</text>
<text x="1505.9" y="708.6" font-size="16.1" fill="#111" font-weight="normal" text-anchor="start" textLength="24.83" lengthAdjust="spacingAndGlyphs">100</text>
<text x="1469.5" y="765.67" font-size="16.5" fill="#111" font-weight="normal" text-anchor="start">inchQC</text>
<line x1="1517.08" y1="783.98" x2="1418.22" y2="783.98" stroke="#000080" stroke-width="2.3" stroke-linecap="butt"/>
<circle cx="1517.08" cy="783.98" r="9" fill="#a9a9a9" stroke="#3a3a3a" stroke-width="1.2"/>
<path d="M1517.08 783.98L1524.8 786.05A8 8 0 0 1 1521.08 790.9Z" fill="#6e6e6e"/>
<ellipse cx="1513.3" cy="780.2" rx="2.88" ry="1.8" fill="#f4f4f4" transform="rotate(45 1513.3 780.2)"/>
<path d="M1078.8 911.8V831.2H1571" fill="none" stroke="#ffffff" stroke-width="1.5"/>
<path d="M1078.8 911.8H1571V831.2" fill="none" stroke="#8a8a8a" stroke-width="1.5"/>
<rect x="1094" y="854" width="38" height="36.5" fill="#202020"/>
<rect x="1096" y="856" width="34" height="32.5" fill="#d83030"/>
<rect x="1098" y="858" width="30" height="28.5" fill="#ee3c3c"/>
<rect x="1159.8" y="854" width="37.2" height="36.5" fill="#7c7c7c"/>
<rect x="1161.3" y="855.5" width="35.7" height="35" fill="#ffffff"/>
<rect x="1161.3" y="855.5" width="34" height="33.3" fill="#c6c6c6"/>
<rect x="1164.5" y="858.5" width="28" height="27.5" fill="none" stroke="#b0b0b0" stroke-width="1.5"/>
<rect x="1266.5" y="854" width="205" height="36.5" fill="#6e6e6e"/>
<rect x="1266.5" y="854" width="203.5" height="35" fill="#ffffff"/>
<rect x="1268" y="855.5" width="202" height="33.5" fill="#f0f0f0"/>
<text x="1323.4" y="877.8" font-size="15.5" fill="#4c4c4c" font-weight="normal" text-anchor="start" textLength="90.8" lengthAdjust="spacingAndGlyphs">View Alarms</text>
<rect x="1497" y="841" width="62.2" height="62.6" fill="#858585"/>
<rect x="1497" y="841" width="60.4" height="60.8" fill="#ffffff"/>
<rect x="1498.5" y="842.5" width="58.9" height="59.3" fill="#e8e8e8"/>
<line x1="1530.6" y1="871.5" x2="1551.4" y2="871.5" stroke="#3a3a00" stroke-width="3.6" stroke-linecap="butt"/>
<line x1="1529.72" y1="869.38" x2="1544.43" y2="854.67" stroke="#3a3a00" stroke-width="3.6" stroke-linecap="butt"/>
<line x1="1527.6" y1="868.5" x2="1527.6" y2="847.7" stroke="#3a3a00" stroke-width="3.6" stroke-linecap="butt"/>
<line x1="1525.48" y1="869.38" x2="1510.77" y2="854.67" stroke="#3a3a00" stroke-width="3.6" stroke-linecap="butt"/>
<line x1="1524.6" y1="871.5" x2="1503.8" y2="871.5" stroke="#3a3a00" stroke-width="3.6" stroke-linecap="butt"/>
<line x1="1525.48" y1="873.62" x2="1510.77" y2="888.33" stroke="#3a3a00" stroke-width="3.6" stroke-linecap="butt"/>
<line x1="1527.6" y1="874.5" x2="1527.6" y2="895.3" stroke="#3a3a00" stroke-width="3.6" stroke-linecap="butt"/>
<line x1="1529.72" y1="873.62" x2="1544.43" y2="888.33" stroke="#3a3a00" stroke-width="3.6" stroke-linecap="butt"/>
<line x1="1529.6" y1="871.5" x2="1550.6" y2="871.5" stroke="#ffff00" stroke-width="2.1" stroke-linecap="butt"/>
<line x1="1529.01" y1="870.09" x2="1543.86" y2="855.24" stroke="#ffff00" stroke-width="2.1" stroke-linecap="butt"/>
<line x1="1527.6" y1="869.5" x2="1527.6" y2="848.5" stroke="#ffff00" stroke-width="2.1" stroke-linecap="butt"/>
<line x1="1526.19" y1="870.09" x2="1511.34" y2="855.24" stroke="#ffff00" stroke-width="2.1" stroke-linecap="butt"/>
<line x1="1525.6" y1="871.5" x2="1504.6" y2="871.5" stroke="#ffff00" stroke-width="2.1" stroke-linecap="butt"/>
<line x1="1526.19" y1="872.91" x2="1511.34" y2="887.76" stroke="#ffff00" stroke-width="2.1" stroke-linecap="butt"/>
<line x1="1527.6" y1="873.5" x2="1527.6" y2="894.5" stroke="#ffff00" stroke-width="2.1" stroke-linecap="butt"/>
<line x1="1529.01" y1="872.91" x2="1543.86" y2="887.76" stroke="#ffff00" stroke-width="2.1" stroke-linecap="butt"/>
<circle cx="1527.6" cy="871.5" r="17" fill="none" stroke="#3a3a00" stroke-width="5.6"/>
<circle cx="1527.6" cy="871.5" r="17" fill="none" stroke="#ffff00" stroke-width="3.8"/>
<circle cx="1527.6" cy="871.5" r="3.4" fill="#ffff00" stroke="#3a3a00" stroke-width=".8"/>
<g style="filter:drop-shadow(1px 1px 0 #fff)">
<text x="65.3" y="141.8" font-size="16" fill="#808080" font-weight="bold" text-anchor="start" textLength="38" lengthAdjust="spacingAndGlyphs">Grey</text>
<text transform="translate(13.8 236.8) rotate(-90)" font-size="16" font-weight="bold" fill="#000000" textLength="42" lengthAdjust="spacingAndGlyphs">Black</text>
<text x="948.8" y="140.6" font-size="16" fill="#808080" font-weight="bold" text-anchor="start" textLength="38" lengthAdjust="spacingAndGlyphs">Grey</text>
<text transform="translate(898.7 235.6) rotate(-90)" font-size="16" font-weight="bold" fill="#000000" textLength="42" lengthAdjust="spacingAndGlyphs">Black</text>
<text x="19.5" y="304.2" font-size="16" fill="#000080" font-weight="bold" text-anchor="start" textLength="139.2" lengthAdjust="spacingAndGlyphs">Smoke Indicator</text>
<text x="901" y="303.2" font-size="16" fill="#000080" font-weight="bold" text-anchor="start" textLength="139.3" lengthAdjust="spacingAndGlyphs">Smoke Indicator</text>
<text x="43.3" y="456" font-size="16" fill="#000080" font-weight="bold" text-anchor="start" textLength="78.4" lengthAdjust="spacingAndGlyphs">Air / Fuel</text>
<text x="60.7" y="476" font-size="16" fill="#000080" font-weight="bold" text-anchor="start" textLength="45.3" lengthAdjust="spacingAndGlyphs">Ratio</text>
<text x="932.3" y="456" font-size="16" fill="#000080" font-weight="bold" text-anchor="start" textLength="76.7" lengthAdjust="spacingAndGlyphs">Air / Fuel</text>
<text x="949" y="476" font-size="16" fill="#000080" font-weight="bold" text-anchor="start" textLength="45" lengthAdjust="spacingAndGlyphs">Ratio</text>
<text x="175.8" y="337.7" font-size="16" fill="#000080" font-weight="bold" text-anchor="start" textLength="124.8" lengthAdjust="spacingAndGlyphs">Superh. Steam</text>
<text x="322.5" y="335.4" font-size="16" fill="#000080" font-weight="bold" text-anchor="start" textLength="103.2" lengthAdjust="spacingAndGlyphs">Drum Steam</text>
<text x="176" y="503.3" font-size="16" fill="#000080" font-weight="bold" text-anchor="start" textLength="125.7" lengthAdjust="spacingAndGlyphs">Superh. Steam</text>
<text x="310.7" y="506" font-size="16" fill="#000080" font-weight="bold" text-anchor="start" textLength="121" lengthAdjust="spacingAndGlyphs">Desup. Steam</text>
<text x="184.3" y="675" font-size="16" fill="#000080" font-weight="bold" text-anchor="start" textLength="105" lengthAdjust="spacingAndGlyphs">GF bef. burn</text>
<text x="316.7" y="675" font-size="16" fill="#000080" font-weight="bold" text-anchor="start" textLength="110" lengthAdjust="spacingAndGlyphs">FO bef. burn.</text>
<text x="627.3" y="336.7" font-size="16" fill="#000080" font-weight="bold" text-anchor="start" textLength="103.4" lengthAdjust="spacingAndGlyphs">Drum Steam</text>
<text x="756.3" y="339.3" font-size="16" fill="#000080" font-weight="bold" text-anchor="start" textLength="125" lengthAdjust="spacingAndGlyphs">Superh. Steam</text>
<text x="613.3" y="506" font-size="16" fill="#000080" font-weight="bold" text-anchor="start" textLength="120" lengthAdjust="spacingAndGlyphs">Desup. Steam</text>
<text x="755" y="503.3" font-size="16" fill="#000080" font-weight="bold" text-anchor="start" textLength="125" lengthAdjust="spacingAndGlyphs">Superh. Steam</text>
<text x="621.7" y="675" font-size="16" fill="#000080" font-weight="bold" text-anchor="start" textLength="109.6" lengthAdjust="spacingAndGlyphs">FO bef. burn.</text>
<text x="761.3" y="675" font-size="16" fill="#000080" font-weight="bold" text-anchor="start" textLength="103.7" lengthAdjust="spacingAndGlyphs">GF bef. burn</text>
<text x="104.6" y="704.3" font-size="16" fill="#000080" font-weight="bold" text-anchor="start" textLength="25.9" lengthAdjust="spacingAndGlyphs">ON</text>
<text x="39.4" y="720.8" font-size="16" fill="#000080" font-weight="bold" text-anchor="start" textLength="88.1" lengthAdjust="spacingAndGlyphs">FD Blower</text>
<text x="992.5" y="704.3" font-size="16" fill="#000080" font-weight="bold" text-anchor="start" textLength="26" lengthAdjust="spacingAndGlyphs">ON</text>
<text x="928" y="720.8" font-size="16" fill="#000080" font-weight="bold" text-anchor="start" textLength="87.7" lengthAdjust="spacingAndGlyphs">FD Blower</text>
<text x="457.3" y="655" font-size="16" fill="#000080" font-weight="bold" text-anchor="start" textLength="44.4" lengthAdjust="spacingAndGlyphs">Drum</text>
<text x="457.3" y="675" font-size="16" fill="#000080" font-weight="bold" text-anchor="start" textLength="46.7" lengthAdjust="spacingAndGlyphs">Level</text>
<text x="550" y="655" font-size="16" fill="#000080" font-weight="bold" text-anchor="start" textLength="43.3" lengthAdjust="spacingAndGlyphs">Drum</text>
<text x="550" y="676" font-size="16" fill="#000080" font-weight="bold" text-anchor="start" textLength="45.7" lengthAdjust="spacingAndGlyphs">Level</text>
<text x="188.3" y="713.3" font-size="16" fill="#000080" font-weight="bold" text-anchor="start" textLength="80" lengthAdjust="spacingAndGlyphs">GF Purge</text>
<text x="785" y="713.3" font-size="16" fill="#000080" font-weight="bold" text-anchor="start" textLength="80" lengthAdjust="spacingAndGlyphs">GF Purge</text>
<text x="397.4" y="704.3" font-size="16" fill="#000080" font-weight="bold" text-anchor="start" textLength="65" lengthAdjust="spacingAndGlyphs">Burners</text>
<text x="362.3" y="720.6" font-size="16" fill="#000080" font-weight="bold" text-anchor="start" textLength="33.7" lengthAdjust="spacingAndGlyphs">Gas</text>
<text x="466.3" y="720.6" font-size="16" fill="#000080" font-weight="bold" text-anchor="start" textLength="23.5" lengthAdjust="spacingAndGlyphs">FO</text>
<text x="416.6" y="761.7" font-size="16" font-weight="bold" fill="#000080" textLength="24.5" lengthAdjust="spacingAndGlyphs"><tspan font-style="italic">#</tspan> 2</text>
<text x="416.6" y="819.3" font-size="16" font-weight="bold" fill="#000080" textLength="24.5" lengthAdjust="spacingAndGlyphs"><tspan font-style="italic">#</tspan> 1</text>
<text x="416.6" y="874.3" font-size="16" font-weight="bold" fill="#000080" textLength="24.5" lengthAdjust="spacingAndGlyphs"><tspan font-style="italic">#</tspan> 3</text>
<text x="592.3" y="704.3" font-size="16" fill="#000080" font-weight="bold" text-anchor="start" textLength="65" lengthAdjust="spacingAndGlyphs">Burners</text>
<text x="564" y="720.6" font-size="16" fill="#000080" font-weight="bold" text-anchor="start" textLength="24" lengthAdjust="spacingAndGlyphs">FO</text>
<text x="658.3" y="720.6" font-size="16" fill="#000080" font-weight="bold" text-anchor="start" textLength="34" lengthAdjust="spacingAndGlyphs">Gas</text>
<text x="612.5" y="761.7" font-size="16" font-weight="bold" fill="#000080" textLength="24.5" lengthAdjust="spacingAndGlyphs"><tspan font-style="italic">#</tspan> 2</text>
<text x="612.5" y="819.3" font-size="16" font-weight="bold" fill="#000080" textLength="24.5" lengthAdjust="spacingAndGlyphs"><tspan font-style="italic">#</tspan> 1</text>
<text x="612.5" y="874.3" font-size="16" font-weight="bold" fill="#000080" textLength="24.5" lengthAdjust="spacingAndGlyphs"><tspan font-style="italic">#</tspan> 3</text>
<text x="28.3" y="876.7" font-size="16" fill="#000080" font-weight="bold" text-anchor="start" textLength="110" lengthAdjust="spacingAndGlyphs">Superheated</text>
<text x="27.3" y="896.7" font-size="16" fill="#000080" font-weight="bold" text-anchor="start" textLength="112.7" lengthAdjust="spacingAndGlyphs">Steam Temp.</text>
<text x="209.3" y="876.7" font-size="16" fill="#000080" font-weight="bold" text-anchor="start" textLength="85.7" lengthAdjust="spacingAndGlyphs">FO before</text>
<text x="201" y="896.7" font-size="16" fill="#000080" font-weight="bold" text-anchor="start" textLength="102.3" lengthAdjust="spacingAndGlyphs">Burn. Press.</text>
<text x="758.3" y="876" font-size="16" fill="#000080" font-weight="bold" text-anchor="start" textLength="85.7" lengthAdjust="spacingAndGlyphs">FO before</text>
<text x="750" y="895.7" font-size="16" fill="#000080" font-weight="bold" text-anchor="start" textLength="102.3" lengthAdjust="spacingAndGlyphs">Burn. Press.</text>
<text x="914" y="876" font-size="16" fill="#000080" font-weight="bold" text-anchor="start" textLength="111" lengthAdjust="spacingAndGlyphs">Superheated</text>
<text x="914" y="895.7" font-size="16" fill="#000080" font-weight="bold" text-anchor="start" textLength="113.3" lengthAdjust="spacingAndGlyphs">Steam Temp.</text>
<text x="1444.7" y="218.4" font-size="16" fill="#000080" font-weight="bold" text-anchor="start" textLength="43.8" lengthAdjust="spacingAndGlyphs">Shaft</text>
<text x="1444.7" y="238.8" font-size="16" fill="#000080" font-weight="bold" text-anchor="start" textLength="56.7" lengthAdjust="spacingAndGlyphs">Speed</text>
<text x="1109.9" y="494.4" font-size="16" fill="#000080" font-weight="bold" text-anchor="start" textLength="127.2" lengthAdjust="spacingAndGlyphs">Sup. Steam SB</text>
<text x="1258.5" y="494.4" font-size="16" fill="#000080" font-weight="bold" text-anchor="start" textLength="128" lengthAdjust="spacingAndGlyphs">Sup. Steam PS</text>
<text x="1401.5" y="493" font-size="16" fill="#000080" font-weight="bold" text-anchor="start" textLength="144.5" lengthAdjust="spacingAndGlyphs">Main Steam Duct</text>
<text x="1113.7" y="659.5" font-size="16" fill="#000080" font-weight="bold" text-anchor="start" textLength="116.7" lengthAdjust="spacingAndGlyphs">GF before ER</text>
<text x="1256.8" y="659.5" font-size="16" fill="#000080" font-weight="bold" text-anchor="start" textLength="126.5" lengthAdjust="spacingAndGlyphs">FO bef. Boilers</text>
<text x="1405.2" y="659.5" font-size="16" fill="#000080" font-weight="bold" text-anchor="start" textLength="123" lengthAdjust="spacingAndGlyphs">Steam bef. ME</text>
<text x="1107.4" y="821.5" font-size="16" fill="#000080" font-weight="bold" text-anchor="start" textLength="125.1" lengthAdjust="spacingAndGlyphs">Nitr. Buff. Tank</text>
<text x="1259.3" y="821.5" font-size="16" fill="#000080" font-weight="bold" text-anchor="start" textLength="118.7" lengthAdjust="spacingAndGlyphs">SW Main Duct</text>
<text x="1405.3" y="821.5" font-size="16" fill="#000080" font-weight="bold" text-anchor="start" textLength="128.2" lengthAdjust="spacingAndGlyphs">Condens.Vacc.</text>
<text x="1086.7" y="906.4" font-size="16" fill="#000080" font-weight="bold" text-anchor="start" textLength="49.2" lengthAdjust="spacingAndGlyphs">Alarm</text>
<text x="1146.4" y="906.4" font-size="16" fill="#000080" font-weight="bold" text-anchor="start" textLength="63.6" lengthAdjust="spacingAndGlyphs">Snooze</text>
</g>
<g style="filter:drop-shadow(1.5px 1.5px 0 #fff)">
<text x="176.7" y="171.7" font-size="40.4" fill="#000080" font-weight="bold" text-anchor="start" textLength="258.3" lengthAdjust="spacingAndGlyphs">STARBOARD</text>
<text x="644" y="171.7" font-size="40.4" fill="#000080" font-weight="bold" text-anchor="start" textLength="219" lengthAdjust="spacingAndGlyphs">PORT SIDE</text>
</g>
</svg>
<svg id="wm" width="1574" height="944" viewBox="0 0 1574 944">

<defs>
<filter id="wmf" filterUnits="userSpaceOnUse" x="200" y="700" width="1374" height="244" color-interpolation-filters="sRGB">
 <feMorphology in="SourceGraphic" operator="dilate" radius="12 8" result="o"/>
 <feMorphology in="SourceGraphic" operator="dilate" radius="6 3" result="i"/>
 <feFlood x="200" y="700" width="1374" height="130" flood-color="#000" result="t"/>
 <feComposite in="i" in2="t" operator="in" result="it"/>
 <feComposite in="o" in2="it" operator="out"/>
</filter>
</defs>
<path fill-rule="evenodd" fill="#0073b4" opacity="0.6" d="M229.5 829.5L182.65 818.71L223.87 793.96L175.98 798.17L207.54 761.9L163.29 780.71L182.1 736.46L145.83 768.02L150.04 720.13L125.29 761.35L114.5 714.5L103.71 761.35L78.96 720.13L83.17 768.02L46.9 736.46L65.71 780.71L21.46 761.9L53.02 798.17L5.13 793.96L46.35 818.71L-0.5 829.5L46.35 840.29L5.13 865.04L53.02 860.83L21.46 897.1L65.71 878.29L46.9 922.54L83.17 890.98L78.96 938.87L103.71 897.65L114.5 944.5L125.29 897.65L150.04 938.87L145.83 890.98L182.1 922.54L163.29 878.29L207.54 897.1L175.98 860.83L223.87 865.04L182.65 840.29ZM52.5 830A62 62 0 0 1 176.5 830Z"/>
<text aria-label="SEATRACKER.RU" y="879" font-size="152.72" filter="url(#wmf)" opacity="0.6" fill="#0073b4"><tspan x="255.01" textLength="73.07" lengthAdjust="spacingAndGlyphs">S</tspan><tspan x="350.89" textLength="82.45" lengthAdjust="spacingAndGlyphs">E</tspan><tspan x="422.39" textLength="119.22" lengthAdjust="spacingAndGlyphs">A</tspan><tspan x="544.79" textLength="77.47" lengthAdjust="spacingAndGlyphs">T</tspan><tspan x="626.68" textLength="98.13" lengthAdjust="spacingAndGlyphs">R</tspan><tspan x="750.7" textLength="96.28" lengthAdjust="spacingAndGlyphs">A</tspan><tspan x="856.52" textLength="81.02" lengthAdjust="spacingAndGlyphs">C</tspan><tspan x="945.59" textLength="109.51" lengthAdjust="spacingAndGlyphs">K</tspan><tspan x="1076" textLength="77.99" lengthAdjust="spacingAndGlyphs">E</tspan><tspan x="1168.73" textLength="96.1" lengthAdjust="spacingAndGlyphs">R</tspan><tspan x="1285.39" textLength="26.22" lengthAdjust="spacingAndGlyphs">.</tspan><tspan x="1334.8" textLength="93.07" lengthAdjust="spacingAndGlyphs">R</tspan><tspan x="1449.89" textLength="90.22" lengthAdjust="spacingAndGlyphs">U</tspan></text>

</svg>
</body></html>
